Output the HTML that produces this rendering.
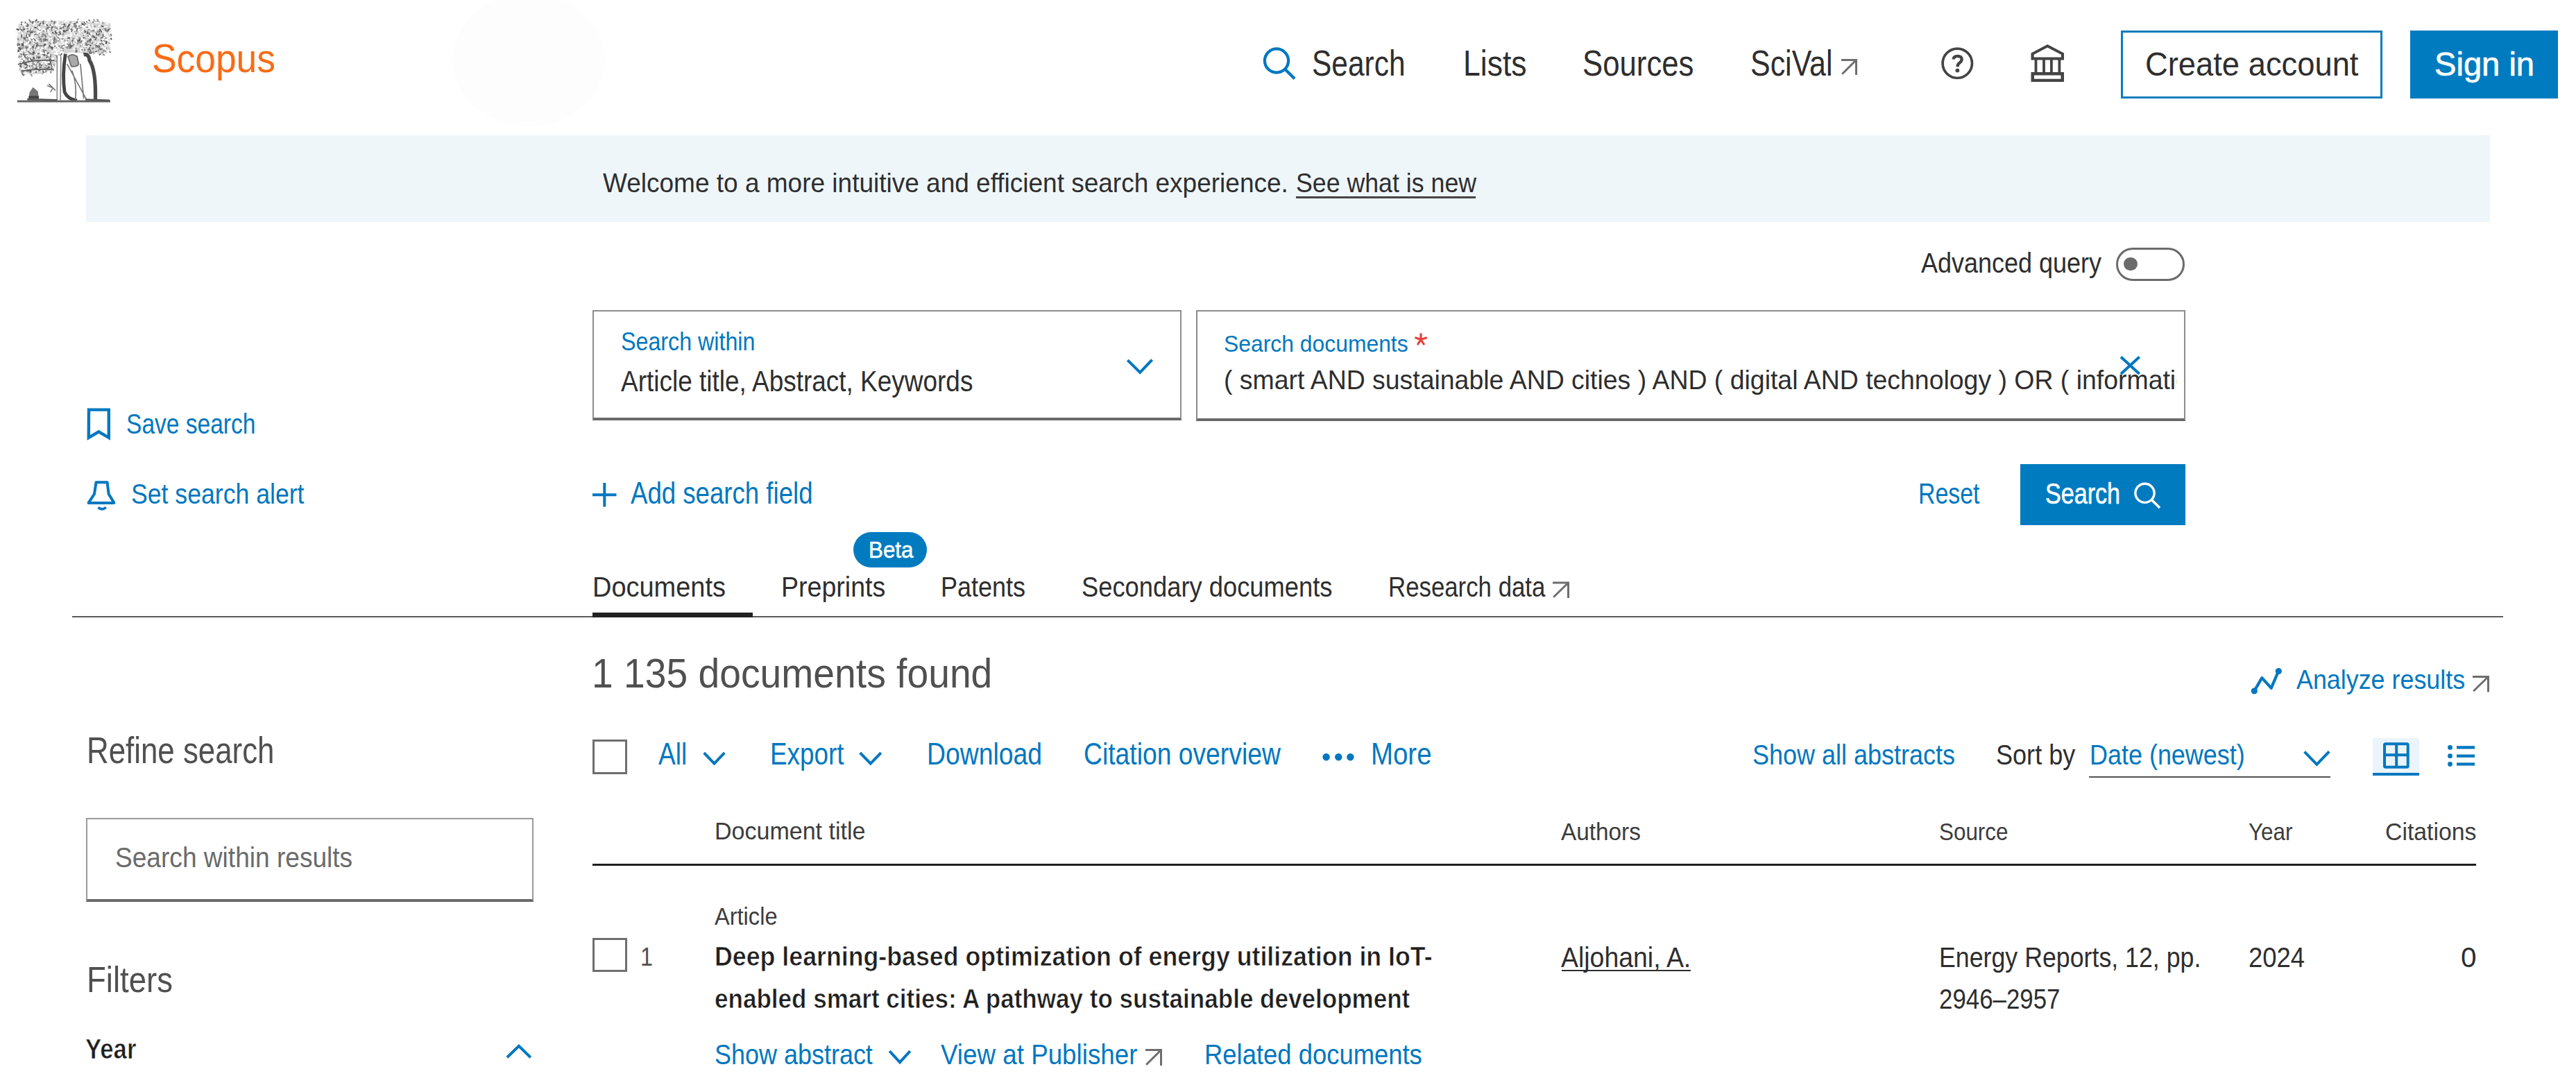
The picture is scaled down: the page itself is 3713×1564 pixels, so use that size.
<!DOCTYPE html>
<html><head><meta charset="utf-8"><title>Scopus - Document search results</title>
<style>
html,body{margin:0;padding:0;background:#fff;}
body{width:3713px;height:1564px;position:relative;overflow:hidden;font-family:"Liberation Sans",sans-serif;}
.t{position:absolute;white-space:nowrap;line-height:1;transform-origin:0 0;}
.r{position:absolute;box-sizing:border-box;}
</style></head><body>
<div class="r" style="left:652px;top:-10px;width:220px;height:192px;border-radius:50%;background:#fdfdfd"></div>
<svg class="r" style="left:20px;top:25px;width:145px;height:130px" viewBox="0 0 1210 1085" preserveAspectRatio="none"><polygon points="60,60 200,40 400,45 600,40 800,45 1000,40 1160,70 1170,200 1150,300 1165,400 1080,450 900,440 700,420 600,440 520,470 500,560 480,650 300,680 120,690 60,640 70,520 50,400 40,250 50,130" fill="#d4d4d4"/><path d="M73 343 L103 331" stroke="#777" stroke-width="13"/><path d="M570 200 L541 192" stroke="#555" stroke-width="18"/><path d="M501 158 L519 139" stroke="#555" stroke-width="13"/><path d="M738 122 L775 123" stroke="#777" stroke-width="18"/><path d="M1125 148 L1137 169" stroke="#777" stroke-width="16"/><path d="M806 173 L837 161" stroke="#fff" stroke-width="14"/><path d="M448 148 L460 163" stroke="#999" stroke-width="19"/><path d="M840 83 L824 102" stroke="#f4f4f4" stroke-width="15"/><path d="M104 674 L139 679" stroke="#fff" stroke-width="12"/><path d="M930 278 L914 269" stroke="#555" stroke-width="18"/><path d="M174 200 L186 174" stroke="#fff" stroke-width="15"/><path d="M162 526 L173 491" stroke="#555" stroke-width="15"/><path d="M1146 176 L1120 173" stroke="#777" stroke-width="15"/><path d="M1084 394 L1075 417" stroke="#777" stroke-width="18"/><path d="M390 354 L386 335" stroke="#fff" stroke-width="16"/><path d="M499 194 L469 174" stroke="#fff" stroke-width="17"/><path d="M205 676 L182 649" stroke="#999" stroke-width="19"/><path d="M188 516 L218 506" stroke="#fff" stroke-width="13"/><path d="M531 137 L545 117" stroke="#fff" stroke-width="19"/><path d="M741 150 L702 145" stroke="#f4f4f4" stroke-width="18"/><path d="M581 229 L564 241" stroke="#fff" stroke-width="19"/><path d="M641 157 L675 142" stroke="#777" stroke-width="13"/><path d="M348 548 L365 529" stroke="#999" stroke-width="18"/><path d="M451 498 L445 526" stroke="#f4f4f4" stroke-width="18"/><path d="M1121 261 L1137 294" stroke="#fff" stroke-width="16"/><path d="M323 477 L288 485" stroke="#f4f4f4" stroke-width="17"/><path d="M443 218 L421 250" stroke="#fff" stroke-width="15"/><path d="M1121 377 L1100 373" stroke="#999" stroke-width="19"/><path d="M234 547 L206 531" stroke="#fff" stroke-width="14"/><path d="M261 421 L245 406" stroke="#f4f4f4" stroke-width="13"/><path d="M1147 148 L1163 135" stroke="#777" stroke-width="16"/><path d="M660 310 L640 336" stroke="#555" stroke-width="17"/><path d="M309 627 L336 627" stroke="#999" stroke-width="19"/><path d="M661 236 L653 264" stroke="#fff" stroke-width="14"/><path d="M437 124 L412 140" stroke="#fff" stroke-width="15"/><path d="M201 427 L165 412" stroke="#777" stroke-width="17"/><path d="M437 621 L457 621" stroke="#fff" stroke-width="19"/><path d="M650 252 L671 230" stroke="#fff" stroke-width="15"/><path d="M296 229 L322 225" stroke="#777" stroke-width="17"/><path d="M601 310 L584 346" stroke="#fff" stroke-width="19"/><path d="M202 55 L181 22" stroke="#777" stroke-width="14"/><path d="M55 386 L49 424" stroke="#555" stroke-width="14"/><path d="M342 141 L367 139" stroke="#fff" stroke-width="20"/><path d="M58 122 L51 155" stroke="#fff" stroke-width="14"/><path d="M639 342 L617 368" stroke="#fff" stroke-width="13"/><path d="M815 110 L806 89" stroke="#fff" stroke-width="18"/><path d="M523 414 L515 383" stroke="#fff" stroke-width="19"/><path d="M991 349 L977 318" stroke="#999" stroke-width="16"/><path d="M897 237 L932 238" stroke="#fff" stroke-width="14"/><path d="M201 351 L174 342" stroke="#999" stroke-width="16"/><path d="M521 392 L553 402" stroke="#999" stroke-width="19"/><path d="M69 510 L108 504" stroke="#f4f4f4" stroke-width="16"/><path d="M179 120 L152 96" stroke="#555" stroke-width="18"/><path d="M192 230 L211 220" stroke="#fff" stroke-width="13"/><path d="M946 84 L953 113" stroke="#f4f4f4" stroke-width="15"/><path d="M121 77 L91 62" stroke="#fff" stroke-width="13"/><path d="M528 244 L505 228" stroke="#f4f4f4" stroke-width="15"/><path d="M103 493 L122 519" stroke="#fff" stroke-width="14"/><path d="M1104 397 L1108 416" stroke="#777" stroke-width="14"/><path d="M888 376 L904 393" stroke="#999" stroke-width="16"/><path d="M479 125 L505 128" stroke="#fff" stroke-width="17"/><path d="M143 121 L124 108" stroke="#fff" stroke-width="16"/><path d="M405 558 L439 564" stroke="#555" stroke-width="19"/><path d="M1107 319 L1117 286" stroke="#555" stroke-width="20"/><path d="M198 446 L184 464" stroke="#999" stroke-width="19"/><path d="M467 510 L452 529" stroke="#f4f4f4" stroke-width="15"/><path d="M1002 376 L977 360" stroke="#f4f4f4" stroke-width="13"/><path d="M112 64 L120 85" stroke="#fff" stroke-width="19"/><path d="M1045 443 L1020 455" stroke="#555" stroke-width="14"/><path d="M778 86 L804 59" stroke="#fff" stroke-width="13"/><path d="M327 220 L340 241" stroke="#777" stroke-width="12"/><path d="M1053 264 L1053 239" stroke="#555" stroke-width="18"/><path d="M801 347 L821 340" stroke="#f4f4f4" stroke-width="15"/><path d="M553 196 L572 195" stroke="#f4f4f4" stroke-width="12"/><path d="M300 91 L268 114" stroke="#999" stroke-width="17"/><path d="M248 275 L285 291" stroke="#fff" stroke-width="13"/><path d="M312 477 L342 465" stroke="#fff" stroke-width="18"/><path d="M346 340 L314 350" stroke="#777" stroke-width="12"/><path d="M626 268 L643 278" stroke="#fff" stroke-width="13"/><path d="M768 363 L772 345" stroke="#fff" stroke-width="16"/><path d="M1114 166 L1103 136" stroke="#777" stroke-width="16"/><path d="M135 244 L159 263" stroke="#777" stroke-width="17"/><path d="M1008 179 L1038 183" stroke="#fff" stroke-width="15"/><path d="M908 380 L920 393" stroke="#999" stroke-width="18"/><path d="M667 130 L632 134" stroke="#999" stroke-width="19"/><path d="M394 124 L414 136" stroke="#555" stroke-width="18"/><path d="M352 360 L352 394" stroke="#999" stroke-width="19"/><path d="M1041 87 L1044 61" stroke="#fff" stroke-width="12"/><path d="M363 651 L376 665" stroke="#777" stroke-width="19"/><path d="M342 568 L327 582" stroke="#555" stroke-width="14"/><path d="M195 364 L187 380" stroke="#fff" stroke-width="18"/><path d="M670 58 L689 64" stroke="#999" stroke-width="15"/><path d="M332 658 L361 662" stroke="#777" stroke-width="15"/><path d="M413 48 L382 30" stroke="#f4f4f4" stroke-width="20"/><path d="M343 434 L329 418" stroke="#fff" stroke-width="18"/><path d="M174 246 L198 232" stroke="#fff" stroke-width="13"/><path d="M95 474 L110 498" stroke="#fff" stroke-width="17"/><path d="M157 569 L140 579" stroke="#555" stroke-width="12"/><path d="M692 353 L712 335" stroke="#777" stroke-width="14"/><path d="M969 237 L934 234" stroke="#777" stroke-width="15"/><path d="M110 361 L98 379" stroke="#777" stroke-width="16"/><path d="M83 150 L110 170" stroke="#777" stroke-width="18"/><path d="M893 350 L864 356" stroke="#555" stroke-width="18"/><path d="M465 47 L435 44" stroke="#777" stroke-width="19"/><path d="M65 481 L43 462" stroke="#fff" stroke-width="16"/><path d="M835 299 L871 295" stroke="#f4f4f4" stroke-width="16"/><path d="M109 135 L75 155" stroke="#555" stroke-width="17"/><path d="M630 225 L648 234" stroke="#999" stroke-width="17"/><path d="M305 65 L338 85" stroke="#999" stroke-width="19"/><path d="M875 437 L882 466" stroke="#555" stroke-width="14"/><path d="M1141 394 L1127 405" stroke="#fff" stroke-width="15"/><path d="M888 383 L897 415" stroke="#999" stroke-width="15"/><path d="M163 488 L131 477" stroke="#999" stroke-width="14"/><path d="M153 231 L163 197" stroke="#555" stroke-width="19"/><path d="M229 451 L232 429" stroke="#555" stroke-width="17"/><path d="M657 305 L660 333" stroke="#fff" stroke-width="19"/><path d="M382 222 L351 198" stroke="#777" stroke-width="15"/><path d="M209 232 L180 222" stroke="#fff" stroke-width="14"/><path d="M109 355 L129 321" stroke="#999" stroke-width="14"/><path d="M569 290 L600 268" stroke="#fff" stroke-width="19"/><path d="M579 106 L586 126" stroke="#555" stroke-width="15"/><path d="M455 534 L431 522" stroke="#999" stroke-width="19"/><path d="M157 107 L177 116" stroke="#999" stroke-width="13"/><path d="M905 200 L931 190" stroke="#555" stroke-width="13"/><path d="M715 283 L703 257" stroke="#999" stroke-width="20"/><path d="M122 534 L117 510" stroke="#555" stroke-width="18"/><path d="M261 263 L285 293" stroke="#f4f4f4" stroke-width="18"/><path d="M932 414 L924 439" stroke="#555" stroke-width="16"/><path d="M97 313 L99 346" stroke="#555" stroke-width="13"/><path d="M1133 400 L1113 409" stroke="#fff" stroke-width="19"/><path d="M317 334 L331 348" stroke="#777" stroke-width="15"/><path d="M59 203 L33 210" stroke="#fff" stroke-width="13"/><path d="M1138 166 L1144 149" stroke="#fff" stroke-width="13"/><path d="M355 661 L344 634" stroke="#555" stroke-width="13"/><path d="M911 365 L936 335" stroke="#f4f4f4" stroke-width="17"/><path d="M759 63 L793 69" stroke="#fff" stroke-width="18"/><path d="M971 321 L985 310" stroke="#777" stroke-width="19"/><path d="M207 548 L173 566" stroke="#999" stroke-width="14"/><path d="M516 216 L492 221" stroke="#f4f4f4" stroke-width="17"/><path d="M127 487 L153 493" stroke="#777" stroke-width="14"/><path d="M194 194 L228 175" stroke="#555" stroke-width="12"/><path d="M958 96 L980 119" stroke="#999" stroke-width="18"/><path d="M212 377 L245 372" stroke="#555" stroke-width="14"/><path d="M160 300 L147 335" stroke="#fff" stroke-width="17"/><path d="M1131 197 L1110 187" stroke="#fff" stroke-width="12"/><path d="M475 194 L466 178" stroke="#555" stroke-width="18"/><path d="M513 368 L486 345" stroke="#555" stroke-width="18"/><path d="M310 490 L336 467" stroke="#fff" stroke-width="14"/><path d="M1085 281 L1052 274" stroke="#fff" stroke-width="20"/><path d="M1156 236 L1176 269" stroke="#555" stroke-width="17"/><path d="M102 178 L88 164" stroke="#fff" stroke-width="14"/><path d="M196 268 L166 269" stroke="#777" stroke-width="17"/><path d="M88 522 L116 547" stroke="#999" stroke-width="20"/><path d="M338 219 L345 186" stroke="#999" stroke-width="14"/><path d="M68 204 L86 235" stroke="#f4f4f4" stroke-width="14"/><path d="M1030 325 L1048 312" stroke="#777" stroke-width="17"/><path d="M1059 271 L1079 290" stroke="#f4f4f4" stroke-width="19"/><path d="M85 423 L110 446" stroke="#fff" stroke-width="16"/><path d="M692 389 L681 357" stroke="#f4f4f4" stroke-width="17"/><path d="M145 83 L114 91" stroke="#fff" stroke-width="18"/><path d="M118 458 L130 441" stroke="#999" stroke-width="14"/><path d="M897 375 L920 359" stroke="#777" stroke-width="17"/><path d="M1106 245 L1085 226" stroke="#777" stroke-width="15"/><path d="M129 316 L106 294" stroke="#777" stroke-width="14"/><path d="M1074 150 L1035 150" stroke="#999" stroke-width="19"/><path d="M204 214 L174 215" stroke="#777" stroke-width="16"/><path d="M788 313 L796 277" stroke="#999" stroke-width="17"/><path d="M262 317 L278 292" stroke="#fff" stroke-width="17"/><path d="M172 540 L161 558" stroke="#f4f4f4" stroke-width="14"/><path d="M894 156 L899 127" stroke="#777" stroke-width="17"/><path d="M858 209 L837 223" stroke="#555" stroke-width="14"/><path d="M371 259 L398 259" stroke="#555" stroke-width="14"/><path d="M244 653 L253 617" stroke="#fff" stroke-width="15"/><path d="M562 87 L528 105" stroke="#fff" stroke-width="14"/><path d="M162 373 L197 357" stroke="#fff" stroke-width="15"/><path d="M232 200 L217 187" stroke="#f4f4f4" stroke-width="20"/><path d="M653 324 L649 354" stroke="#fff" stroke-width="12"/><path d="M191 467 L200 487" stroke="#f4f4f4" stroke-width="16"/><path d="M198 75 L224 64" stroke="#fff" stroke-width="16"/><path d="M329 148 L310 128" stroke="#fff" stroke-width="18"/><path d="M723 127 L733 159" stroke="#f4f4f4" stroke-width="18"/><path d="M543 192 L543 224" stroke="#f4f4f4" stroke-width="16"/><path d="M224 494 L249 513" stroke="#999" stroke-width="17"/><path d="M828 393 L807 385" stroke="#555" stroke-width="15"/><path d="M1079 223 L1060 256" stroke="#777" stroke-width="16"/><path d="M372 281 L376 257" stroke="#777" stroke-width="18"/><path d="M1106 243 L1126 217" stroke="#fff" stroke-width="19"/><path d="M708 340 L734 325" stroke="#999" stroke-width="18"/><path d="M220 361 L255 362" stroke="#fff" stroke-width="19"/><path d="M89 388 L68 391" stroke="#777" stroke-width="13"/><path d="M233 370 L220 347" stroke="#555" stroke-width="15"/><path d="M769 189 L766 207" stroke="#f4f4f4" stroke-width="14"/><path d="M116 645 L94 667" stroke="#777" stroke-width="18"/><path d="M461 428 L463 400" stroke="#f4f4f4" stroke-width="18"/><path d="M1048 385 L1075 385" stroke="#fff" stroke-width="12"/><path d="M906 109 L879 116" stroke="#fff" stroke-width="16"/><path d="M630 56 L639 23" stroke="#fff" stroke-width="16"/><path d="M271 463 L244 473" stroke="#555" stroke-width="18"/><path d="M267 387 L284 373" stroke="#fff" stroke-width="12"/><path d="M524 235 L521 209" stroke="#777" stroke-width="18"/><path d="M169 290 L177 309" stroke="#fff" stroke-width="13"/><path d="M1126 218 L1104 215" stroke="#f4f4f4" stroke-width="19"/><path d="M936 310 L919 283" stroke="#f4f4f4" stroke-width="18"/><path d="M868 172 L839 155" stroke="#555" stroke-width="14"/><path d="M453 102 L433 86" stroke="#777" stroke-width="17"/><path d="M246 394 L235 356" stroke="#f4f4f4" stroke-width="12"/><path d="M982 252 L1000 243" stroke="#777" stroke-width="15"/><path d="M458 616 L455 646" stroke="#999" stroke-width="17"/><path d="M647 151 L622 163" stroke="#555" stroke-width="14"/><path d="M373 571 L400 584" stroke="#777" stroke-width="13"/><path d="M780 244 L802 256" stroke="#777" stroke-width="15"/><path d="M390 481 L411 501" stroke="#555" stroke-width="18"/><path d="M136 357 L153 341" stroke="#999" stroke-width="13"/><path d="M354 332 L384 346" stroke="#777" stroke-width="19"/><path d="M980 423 L1003 435" stroke="#fff" stroke-width="13"/><path d="M431 654 L452 668" stroke="#777" stroke-width="15"/><path d="M157 251 L171 226" stroke="#555" stroke-width="17"/><path d="M106 188 L100 211" stroke="#fff" stroke-width="16"/><path d="M620 101 L583 98" stroke="#fff" stroke-width="17"/><path d="M735 304 L716 313" stroke="#fff" stroke-width="15"/><path d="M83 551 L49 569" stroke="#555" stroke-width="13"/><path d="M87 111 L88 73" stroke="#555" stroke-width="19"/><path d="M373 230 L352 239" stroke="#fff" stroke-width="16"/><path d="M223 256 L213 229" stroke="#fff" stroke-width="19"/><path d="M240 348 L227 377" stroke="#555" stroke-width="16"/><path d="M349 638 L332 665" stroke="#555" stroke-width="15"/><path d="M187 526 L183 498" stroke="#999" stroke-width="13"/><path d="M812 245 L820 265" stroke="#fff" stroke-width="16"/><path d="M174 286 L181 307" stroke="#fff" stroke-width="14"/><path d="M604 418 L566 417" stroke="#fff" stroke-width="14"/><path d="M423 438 L443 471" stroke="#555" stroke-width="14"/><path d="M77 349 L88 386" stroke="#999" stroke-width="18"/><path d="M290 336 L310 341" stroke="#777" stroke-width="13"/><path d="M824 118 L849 99" stroke="#f4f4f4" stroke-width="17"/><path d="M1082 268 L1068 291" stroke="#999" stroke-width="14"/><path d="M482 197 L518 188" stroke="#999" stroke-width="16"/><path d="M302 76 L302 41" stroke="#fff" stroke-width="14"/><path d="M792 103 L759 106" stroke="#555" stroke-width="16"/><path d="M176 92 L176 118" stroke="#fff" stroke-width="16"/><path d="M709 249 L690 265" stroke="#f4f4f4" stroke-width="14"/><path d="M990 420 L958 429" stroke="#fff" stroke-width="17"/><path d="M298 44 L290 65" stroke="#777" stroke-width="15"/><path d="M771 182 L782 164" stroke="#777" stroke-width="13"/><path d="M868 357 L890 334" stroke="#f4f4f4" stroke-width="14"/><path d="M56 147 L75 177" stroke="#fff" stroke-width="14"/><path d="M572 431 L559 414" stroke="#fff" stroke-width="16"/><path d="M1072 157 L1051 151" stroke="#f4f4f4" stroke-width="13"/><path d="M130 269 L119 239" stroke="#555" stroke-width="17"/><path d="M468 565 L492 576" stroke="#777" stroke-width="15"/><path d="M1101 80 L1127 78" stroke="#fff" stroke-width="12"/><path d="M414 485 L393 508" stroke="#fff" stroke-width="17"/><path d="M224 289 L241 256" stroke="#777" stroke-width="17"/><path d="M511 352 L524 334" stroke="#fff" stroke-width="16"/><path d="M310 194 L304 171" stroke="#777" stroke-width="13"/><path d="M1012 135 L980 138" stroke="#f4f4f4" stroke-width="13"/><path d="M166 70 L169 34" stroke="#fff" stroke-width="19"/><path d="M417 540 L385 534" stroke="#f4f4f4" stroke-width="18"/><path d="M424 186 L439 211" stroke="#f4f4f4" stroke-width="19"/><path d="M405 540 L390 531" stroke="#555" stroke-width="14"/><path d="M660 205 L682 201" stroke="#f4f4f4" stroke-width="14"/><path d="M794 409 L817 392" stroke="#999" stroke-width="15"/><path d="M284 324 L270 356" stroke="#777" stroke-width="15"/><path d="M440 202 L432 233" stroke="#fff" stroke-width="14"/><path d="M89 474 L102 459" stroke="#999" stroke-width="18"/><path d="M398 655 L435 665" stroke="#fff" stroke-width="15"/><path d="M169 582 L143 578" stroke="#555" stroke-width="18"/><path d="M47 239 L10 248" stroke="#f4f4f4" stroke-width="13"/><path d="M1156 400 L1149 419" stroke="#fff" stroke-width="20"/><path d="M48 352 L45 312" stroke="#555" stroke-width="14"/><path d="M919 199 L901 208" stroke="#777" stroke-width="17"/><path d="M614 293 L625 324" stroke="#fff" stroke-width="16"/><path d="M454 136 L475 140" stroke="#fff" stroke-width="15"/><path d="M1125 344 L1090 330" stroke="#fff" stroke-width="14"/><path d="M296 357 L296 381" stroke="#fff" stroke-width="19"/><path d="M693 229 L689 211" stroke="#fff" stroke-width="19"/><path d="M791 73 L758 89" stroke="#fff" stroke-width="13"/><path d="M437 486 L441 459" stroke="#777" stroke-width="16"/><path d="M191 656 L210 635" stroke="#fff" stroke-width="14"/><path d="M1148 250 L1180 233" stroke="#f4f4f4" stroke-width="14"/><path d="M459 239 L425 235" stroke="#999" stroke-width="15"/><path d="M233 186 L207 184" stroke="#999" stroke-width="15"/><path d="M985 183 L999 214" stroke="#555" stroke-width="15"/><path d="M90 545 L113 530" stroke="#fff" stroke-width="17"/><path d="M524 166 L528 186" stroke="#555" stroke-width="15"/><path d="M396 188 L410 209" stroke="#999" stroke-width="16"/><path d="M233 615 L250 606" stroke="#fff" stroke-width="15"/><path d="M138 363 L158 359" stroke="#777" stroke-width="17"/><path d="M609 357 L597 331" stroke="#fff" stroke-width="16"/><path d="M743 423 L751 390" stroke="#777" stroke-width="13"/><path d="M893 374 L885 344" stroke="#f4f4f4" stroke-width="14"/><path d="M799 273 L769 285" stroke="#555" stroke-width="18"/><path d="M248 417 L233 398" stroke="#777" stroke-width="17"/><path d="M842 130 L854 109" stroke="#fff" stroke-width="15"/><path d="M395 62 L390 89" stroke="#fff" stroke-width="16"/><path d="M781 210 L799 220" stroke="#fff" stroke-width="13"/><path d="M500 460 L521 476" stroke="#777" stroke-width="16"/><path d="M517 346 L492 371" stroke="#fff" stroke-width="14"/><path d="M260 656 L253 628" stroke="#f4f4f4" stroke-width="13"/><path d="M358 447 L339 434" stroke="#555" stroke-width="15"/><path d="M189 534 L196 566" stroke="#f4f4f4" stroke-width="13"/><path d="M885 105 L863 102" stroke="#fff" stroke-width="20"/><path d="M298 515 L270 527" stroke="#999" stroke-width="13"/><path d="M198 355 L176 379" stroke="#fff" stroke-width="12"/><path d="M197 601 L183 586" stroke="#555" stroke-width="15"/><path d="M82 151 L61 176" stroke="#f4f4f4" stroke-width="16"/><path d="M516 187 L528 162" stroke="#f4f4f4" stroke-width="20"/><path d="M176 509 L208 497" stroke="#f4f4f4" stroke-width="19"/><path d="M258 565 L220 557" stroke="#999" stroke-width="15"/><path d="M1053 307 L1074 319" stroke="#555" stroke-width="13"/><path d="M813 86 L825 69" stroke="#777" stroke-width="19"/><path d="M1080 324 L1094 301" stroke="#fff" stroke-width="15"/><path d="M1151 165 L1181 144" stroke="#f4f4f4" stroke-width="14"/><path d="M80 309 L89 284" stroke="#fff" stroke-width="15"/><path d="M183 432 L211 434" stroke="#777" stroke-width="12"/><path d="M331 361 L358 374" stroke="#f4f4f4" stroke-width="19"/><path d="M236 564 L273 574" stroke="#555" stroke-width="17"/><path d="M149 114 L173 87" stroke="#555" stroke-width="16"/><path d="M307 340 L330 344" stroke="#999" stroke-width="13"/><path d="M571 216 L546 245" stroke="#fff" stroke-width="17"/><path d="M307 165 L341 150" stroke="#555" stroke-width="18"/><path d="M477 348 L467 326" stroke="#fff" stroke-width="16"/><path d="M216 290 L232 274" stroke="#fff" stroke-width="13"/><path d="M449 583 L482 578" stroke="#777" stroke-width="18"/><path d="M859 358 L865 340" stroke="#f4f4f4" stroke-width="20"/><path d="M178 122 L176 96" stroke="#555" stroke-width="19"/><path d="M297 644 L260 650" stroke="#fff" stroke-width="13"/><path d="M223 586 L206 559" stroke="#777" stroke-width="18"/><path d="M525 60 L522 87" stroke="#999" stroke-width="13"/><path d="M869 415 L856 441" stroke="#fff" stroke-width="13"/><path d="M426 551 L419 525" stroke="#fff" stroke-width="13"/><path d="M280 317 L279 353" stroke="#555" stroke-width="15"/><path d="M524 280 L547 279" stroke="#999" stroke-width="18"/><path d="M333 672 L350 681" stroke="#999" stroke-width="17"/><path d="M187 582 L166 551" stroke="#f4f4f4" stroke-width="17"/><path d="M173 225 L201 223" stroke="#777" stroke-width="18"/><path d="M753 94 L760 124" stroke="#777" stroke-width="16"/><path d="M340 146 L319 175" stroke="#fff" stroke-width="17"/><path d="M354 264 L333 263" stroke="#fff" stroke-width="19"/><path d="M726 114 L744 97" stroke="#555" stroke-width="16"/><path d="M602 168 L568 181" stroke="#f4f4f4" stroke-width="15"/><path d="M217 640 L200 646" stroke="#777" stroke-width="16"/><path d="M500 448 L519 430" stroke="#fff" stroke-width="13"/><path d="M1038 208 L1023 192" stroke="#777" stroke-width="18"/><path d="M242 314 L220 288" stroke="#777" stroke-width="15"/><path d="M237 552 L221 543" stroke="#999" stroke-width="20"/><path d="M275 499 L243 524" stroke="#fff" stroke-width="17"/><path d="M914 48 L899 30" stroke="#777" stroke-width="19"/><path d="M851 336 L840 354" stroke="#fff" stroke-width="18"/><path d="M848 326 L822 298" stroke="#fff" stroke-width="16"/><path d="M352 81 L357 61" stroke="#555" stroke-width="17"/><path d="M524 341 L528 375" stroke="#f4f4f4" stroke-width="18"/><path d="M526 359 L503 376" stroke="#999" stroke-width="14"/><path d="M927 59 L940 39" stroke="#fff" stroke-width="20"/><path d="M120 446 L99 466" stroke="#fff" stroke-width="16"/><path d="M595 258 L575 266" stroke="#999" stroke-width="18"/><path d="M692 187 L715 169" stroke="#f4f4f4" stroke-width="13"/><path d="M199 213 L196 187" stroke="#999" stroke-width="17"/><path d="M735 280 L723 257" stroke="#f4f4f4" stroke-width="15"/><path d="M971 233 L983 255" stroke="#777" stroke-width="13"/><path d="M1142 258 L1146 233" stroke="#fff" stroke-width="19"/><path d="M316 239 L295 239" stroke="#777" stroke-width="17"/><path d="M844 370 L814 384" stroke="#555" stroke-width="17"/><path d="M351 534 L331 565" stroke="#fff" stroke-width="14"/><path d="M981 51 L943 59" stroke="#777" stroke-width="16"/><path d="M482 606 L500 640" stroke="#fff" stroke-width="13"/><path d="M67 416 L84 426" stroke="#fff" stroke-width="18"/><path d="M619 274 L604 285" stroke="#999" stroke-width="18"/><path d="M150 172 L156 143" stroke="#f4f4f4" stroke-width="12"/><path d="M276 410 L296 422" stroke="#f4f4f4" stroke-width="18"/><path d="M110 595 L121 617" stroke="#777" stroke-width="19"/><path d="M1166 199 L1175 226" stroke="#777" stroke-width="14"/><path d="M289 642 L323 632" stroke="#777" stroke-width="20"/><path d="M912 437 L913 407" stroke="#777" stroke-width="19"/><path d="M648 317 L662 351" stroke="#777" stroke-width="20"/><path d="M747 360 L717 369" stroke="#fff" stroke-width="14"/><path d="M385 458 L402 463" stroke="#555" stroke-width="18"/><path d="M263 359 L261 381" stroke="#777" stroke-width="14"/><path d="M414 161 L389 167" stroke="#555" stroke-width="17"/><path d="M842 271 L824 258" stroke="#f4f4f4" stroke-width="14"/><path d="M559 202 L550 168" stroke="#777" stroke-width="20"/><path d="M812 406 L799 371" stroke="#f4f4f4" stroke-width="20"/><path d="M277 322 L283 295" stroke="#777" stroke-width="19"/><path d="M766 263 L758 241" stroke="#f4f4f4" stroke-width="14"/><path d="M531 102 L497 95" stroke="#fff" stroke-width="18"/><path d="M371 510 L394 530" stroke="#999" stroke-width="20"/><path d="M1082 180 L1103 186" stroke="#fff" stroke-width="13"/><path d="M415 121 L454 126" stroke="#555" stroke-width="15"/><path d="M332 234 L363 234" stroke="#999" stroke-width="12"/><path d="M653 45 L643 77" stroke="#f4f4f4" stroke-width="13"/><path d="M396 117 L397 154" stroke="#999" stroke-width="13"/><path d="M524 167 L543 145" stroke="#999" stroke-width="15"/><path d="M582 440 L614 435" stroke="#fff" stroke-width="14"/><path d="M384 431 L387 396" stroke="#777" stroke-width="18"/><path d="M258 455 L246 491" stroke="#fff" stroke-width="16"/><path d="M456 337 L447 309" stroke="#fff" stroke-width="18"/><path d="M820 386 L790 385" stroke="#999" stroke-width="15"/><path d="M761 168 L733 170" stroke="#555" stroke-width="12"/><path d="M355 454 L382 452" stroke="#555" stroke-width="18"/><path d="M1132 167 L1145 184" stroke="#f4f4f4" stroke-width="14"/><path d="M398 130 L417 118" stroke="#777" stroke-width="15"/><path d="M664 57 L651 31" stroke="#f4f4f4" stroke-width="18"/><path d="M414 67 L396 71" stroke="#f4f4f4" stroke-width="19"/><path d="M125 453 L120 428" stroke="#f4f4f4" stroke-width="15"/><path d="M287 605 L258 610" stroke="#777" stroke-width="16"/><path d="M97 652 L105 619" stroke="#fff" stroke-width="14"/><path d="M79 61 L60 65" stroke="#fff" stroke-width="13"/><path d="M254 205 L264 226" stroke="#fff" stroke-width="16"/><path d="M283 656 L279 637" stroke="#f4f4f4" stroke-width="15"/><path d="M857 300 L870 331" stroke="#999" stroke-width="15"/><path d="M625 245 L624 213" stroke="#fff" stroke-width="17"/><path d="M197 423 L222 421" stroke="#777" stroke-width="17"/><path d="M133 543 L163 517" stroke="#f4f4f4" stroke-width="14"/><path d="M338 212 L361 216" stroke="#999" stroke-width="18"/><path d="M333 504 L294 510" stroke="#fff" stroke-width="19"/><path d="M365 390 L352 426" stroke="#777" stroke-width="17"/><path d="M146 282 L138 252" stroke="#999" stroke-width="18"/><path d="M899 393 L917 380" stroke="#555" stroke-width="16"/><path d="M230 503 L207 516" stroke="#555" stroke-width="14"/><path d="M128 457 L126 438" stroke="#999" stroke-width="15"/><path d="M929 382 L948 392" stroke="#999" stroke-width="17"/><path d="M1134 305 L1158 316" stroke="#999" stroke-width="12"/><path d="M453 112 L478 117" stroke="#555" stroke-width="13"/><path d="M100 537 L99 574" stroke="#f4f4f4" stroke-width="16"/><path d="M189 552 L220 531" stroke="#fff" stroke-width="13"/><path d="M765 152 L796 136" stroke="#f4f4f4" stroke-width="14"/><path d="M824 158 L847 152" stroke="#fff" stroke-width="15"/><path d="M568 384 L590 358" stroke="#777" stroke-width="16"/><path d="M311 551 L320 573" stroke="#555" stroke-width="12"/><path d="M245 429 L220 419" stroke="#555" stroke-width="14"/><path d="M284 299 L303 270" stroke="#fff" stroke-width="16"/><path d="M418 366 L449 378" stroke="#f4f4f4" stroke-width="19"/><path d="M369 405 L389 438" stroke="#fff" stroke-width="18"/><path d="M287 594 L280 633" stroke="#fff" stroke-width="17"/><path d="M397 221 L377 211" stroke="#f4f4f4" stroke-width="14"/><path d="M301 280 L320 250" stroke="#999" stroke-width="19"/><path d="M413 279 L433 266" stroke="#fff" stroke-width="13"/><path d="M889 228 L915 204" stroke="#555" stroke-width="15"/><path d="M1055 65 L1083 46" stroke="#fff" stroke-width="16"/><path d="M293 159 L293 122" stroke="#777" stroke-width="19"/><path d="M917 348 L927 332" stroke="#555" stroke-width="18"/><path d="M506 135 L526 130" stroke="#555" stroke-width="15"/><path d="M187 484 L156 470" stroke="#999" stroke-width="14"/><path d="M848 179 L866 180" stroke="#555" stroke-width="13"/><path d="M647 273 L628 306" stroke="#999" stroke-width="15"/><path d="M244 324 L238 299" stroke="#fff" stroke-width="16"/><path d="M234 486 L264 474" stroke="#f4f4f4" stroke-width="17"/><path d="M575 298 L575 267" stroke="#f4f4f4" stroke-width="18"/><path d="M478 260 L494 235" stroke="#777" stroke-width="14"/><path d="M273 601 L260 633" stroke="#555" stroke-width="17"/><path d="M86 489 L55 468" stroke="#999" stroke-width="20"/><path d="M567 452 L576 435" stroke="#555" stroke-width="15"/><path d="M1075 228 L1106 247" stroke="#555" stroke-width="16"/><path d="M985 163 L981 125" stroke="#fff" stroke-width="16"/><path d="M1028 368 L1049 391" stroke="#777" stroke-width="17"/><path d="M1095 416 L1072 406" stroke="#999" stroke-width="20"/><path d="M973 245 L945 219" stroke="#555" stroke-width="15"/><path d="M853 94 L819 81" stroke="#555" stroke-width="16"/><path d="M197 268 L199 235" stroke="#fff" stroke-width="19"/><path d="M873 73 L842 61" stroke="#555" stroke-width="20"/><path d="M817 288 L817 256" stroke="#fff" stroke-width="15"/><path d="M142 476 L165 452" stroke="#fff" stroke-width="13"/><path d="M147 449 L183 460" stroke="#777" stroke-width="12"/><path d="M239 423 L254 434" stroke="#555" stroke-width="16"/><path d="M1139 137 L1144 159" stroke="#555" stroke-width="16"/><path d="M379 533 L415 550" stroke="#fff" stroke-width="17"/><path d="M160 637 L122 643" stroke="#fff" stroke-width="18"/><path d="M308 137 L291 119" stroke="#fff" stroke-width="17"/><path d="M603 336 L572 356" stroke="#555" stroke-width="17"/><path d="M412 612 L416 632" stroke="#fff" stroke-width="19"/><path d="M168 264 L203 268" stroke="#f4f4f4" stroke-width="15"/><path d="M884 65 L916 48" stroke="#999" stroke-width="13"/><path d="M56 438 L28 441" stroke="#fff" stroke-width="20"/><path d="M559 371 L597 379" stroke="#555" stroke-width="15"/><path d="M626 240 L663 236" stroke="#f4f4f4" stroke-width="12"/><path d="M492 288 L485 255" stroke="#999" stroke-width="12"/><path d="M338 383 L347 363" stroke="#fff" stroke-width="15"/><path d="M224 366 L191 382" stroke="#999" stroke-width="13"/><path d="M124 472 L142 470" stroke="#555" stroke-width="17"/><path d="M577 133 L548 131" stroke="#777" stroke-width="18"/><path d="M418 375 L430 343" stroke="#999" stroke-width="20"/><path d="M102 314 L121 342" stroke="#555" stroke-width="19"/><path d="M338 266 L314 260" stroke="#777" stroke-width="18"/><path d="M750 395 L731 393" stroke="#777" stroke-width="13"/><path d="M132 140 L110 148" stroke="#555" stroke-width="18"/><path d="M305 435 L275 441" stroke="#555" stroke-width="16"/><path d="M517 78 L536 72" stroke="#fff" stroke-width="17"/><path d="M538 389 L535 415" stroke="#fff" stroke-width="19"/><path d="M177 117 L195 96" stroke="#f4f4f4" stroke-width="14"/><path d="M102 658 L87 670" stroke="#999" stroke-width="14"/><path d="M849 111 L817 99" stroke="#fff" stroke-width="20"/><path d="M254 286 L226 273" stroke="#f4f4f4" stroke-width="13"/><path d="M849 222 L855 192" stroke="#f4f4f4" stroke-width="17"/><path d="M743 233 L763 246" stroke="#f4f4f4" stroke-width="17"/><path d="M76 323 L83 346" stroke="#fff" stroke-width="12"/><path d="M252 112 L262 128" stroke="#999" stroke-width="18"/><path d="M721 81 L729 119" stroke="#999" stroke-width="14"/><path d="M1016 103 L1048 101" stroke="#fff" stroke-width="17"/><path d="M726 56 L706 69" stroke="#f4f4f4" stroke-width="19"/><path d="M310 520 L281 548" stroke="#777" stroke-width="19"/><path d="M702 275 L704 296" stroke="#555" stroke-width="12"/><path d="M361 256 L340 264" stroke="#fff" stroke-width="20"/><path d="M519 441 L481 431" stroke="#fff" stroke-width="18"/><path d="M1030 256 L1010 240" stroke="#f4f4f4" stroke-width="14"/><path d="M424 523 L404 513" stroke="#777" stroke-width="15"/><path d="M763 290 L790 270" stroke="#555" stroke-width="16"/><path d="M225 648 L199 629" stroke="#fff" stroke-width="16"/><path d="M691 369 L665 354" stroke="#777" stroke-width="19"/><path d="M1143 204 L1167 179" stroke="#fff" stroke-width="12"/><path d="M1082 276 L1102 297" stroke="#999" stroke-width="15"/><path d="M720 328 L745 304" stroke="#999" stroke-width="16"/><path d="M119 517 L128 495" stroke="#fff" stroke-width="16"/><path d="M207 679 L217 711" stroke="#999" stroke-width="18"/><path d="M178 174 L157 171" stroke="#555" stroke-width="17"/><path d="M410 455 L435 459" stroke="#fff" stroke-width="20"/><path d="M70 502 L107 502" stroke="#555" stroke-width="15"/><path d="M167 279 L151 249" stroke="#fff" stroke-width="15"/><path d="M258 611 L241 583" stroke="#f4f4f4" stroke-width="12"/><path d="M190 166 L199 186" stroke="#555" stroke-width="14"/><path d="M149 146 L168 146" stroke="#f4f4f4" stroke-width="15"/><path d="M80 512 L107 517" stroke="#fff" stroke-width="17"/><path d="M508 198 L507 177" stroke="#f4f4f4" stroke-width="13"/><path d="M678 175 L700 206" stroke="#f4f4f4" stroke-width="17"/><path d="M276 93 L261 117" stroke="#fff" stroke-width="19"/><path d="M969 209 L979 187" stroke="#fff" stroke-width="19"/><path d="M570 87 L601 80" stroke="#999" stroke-width="14"/><path d="M923 162 L951 164" stroke="#999" stroke-width="17"/><path d="M325 369 L309 397" stroke="#999" stroke-width="19"/><path d="M794 388 L823 369" stroke="#fff" stroke-width="16"/><path d="M215 579 L210 558" stroke="#777" stroke-width="16"/><path d="M407 153 L415 182" stroke="#fff" stroke-width="19"/><path d="M1059 347 L1075 362" stroke="#f4f4f4" stroke-width="19"/><path d="M680 177 L684 154" stroke="#fff" stroke-width="15"/><path d="M54 392 L62 414" stroke="#555" stroke-width="14"/><path d="M486 477 L504 469" stroke="#fff" stroke-width="12"/><path d="M798 192 L781 170" stroke="#f4f4f4" stroke-width="16"/><path d="M1001 354 L1023 362" stroke="#777" stroke-width="16"/><path d="M571 376 L597 396" stroke="#f4f4f4" stroke-width="12"/><path d="M159 93 L158 65" stroke="#777" stroke-width="19"/><path d="M869 338 L907 327" stroke="#555" stroke-width="13"/><path d="M1136 316 L1153 350" stroke="#f4f4f4" stroke-width="13"/><path d="M177 114 L195 146" stroke="#fff" stroke-width="13"/><path d="M460 323 L438 305" stroke="#fff" stroke-width="13"/><path d="M181 214 L169 198" stroke="#777" stroke-width="18"/><path d="M198 591 L172 584" stroke="#fff" stroke-width="18"/><path d="M122 84 L100 83" stroke="#fff" stroke-width="13"/><path d="M1073 427 L1063 443" stroke="#fff" stroke-width="13"/><path d="M750 57 L778 73" stroke="#fff" stroke-width="17"/><path d="M308 112 L294 124" stroke="#fff" stroke-width="17"/><path d="M461 505 L477 493" stroke="#fff" stroke-width="18"/><path d="M153 413 L141 394" stroke="#999" stroke-width="16"/><path d="M383 229 L376 209" stroke="#777" stroke-width="19"/><path d="M73 508 L86 486" stroke="#fff" stroke-width="16"/><path d="M1078 422 L1088 387" stroke="#999" stroke-width="20"/><path d="M506 380 L498 413" stroke="#fff" stroke-width="17"/><path d="M420 332 L436 354" stroke="#777" stroke-width="17"/><path d="M465 115 L453 152" stroke="#777" stroke-width="13"/><path d="M787 134 L804 122" stroke="#999" stroke-width="17"/><path d="M83 585 L86 554" stroke="#777" stroke-width="16"/><path d="M749 381 L719 394" stroke="#fff" stroke-width="15"/><path d="M184 598 L186 576" stroke="#777" stroke-width="15"/><path d="M393 459 L379 446" stroke="#999" stroke-width="13"/><path d="M165 590 L187 616" stroke="#fff" stroke-width="16"/><path d="M821 330 L857 341" stroke="#777" stroke-width="20"/><path d="M180 429 L146 430" stroke="#f4f4f4" stroke-width="16"/><path d="M882 202 L888 169" stroke="#555" stroke-width="15"/><path d="M135 413 L150 388" stroke="#555" stroke-width="15"/><path d="M637 87 L669 104" stroke="#fff" stroke-width="16"/><path d="M715 80 L735 74" stroke="#999" stroke-width="19"/><path d="M398 257 L379 233" stroke="#fff" stroke-width="16"/><path d="M1073 367 L1108 369" stroke="#f4f4f4" stroke-width="16"/><path d="M549 263 L522 235" stroke="#777" stroke-width="14"/><path d="M397 160 L372 129" stroke="#f4f4f4" stroke-width="14"/><path d="M115 456 L143 453" stroke="#777" stroke-width="16"/><path d="M325 614 L302 595" stroke="#f4f4f4" stroke-width="15"/><path d="M231 271 L261 265" stroke="#fff" stroke-width="17"/><path d="M601 100 L596 134" stroke="#777" stroke-width="13"/><path d="M914 93 L892 90" stroke="#fff" stroke-width="14"/><path d="M188 244 L206 274" stroke="#999" stroke-width="15"/><path d="M619 184 L629 165" stroke="#999" stroke-width="16"/><path d="M220 564 L192 565" stroke="#fff" stroke-width="19"/><path d="M152 537 L136 572" stroke="#999" stroke-width="18"/><path d="M863 256 L832 245" stroke="#555" stroke-width="17"/><path d="M751 351 L726 361" stroke="#f4f4f4" stroke-width="14"/><path d="M229 252 L221 219" stroke="#fff" stroke-width="12"/><path d="M480 267 L502 248" stroke="#999" stroke-width="15"/><path d="M123 558 L157 570" stroke="#555" stroke-width="19"/><path d="M499 333 L528 306" stroke="#f4f4f4" stroke-width="19"/><path d="M311 585 L307 551" stroke="#777" stroke-width="13"/><path d="M424 426 L394 441" stroke="#555" stroke-width="18"/><path d="M676 249 L646 251" stroke="#555" stroke-width="14"/><path d="M134 170 L151 159" stroke="#f4f4f4" stroke-width="16"/><path d="M684 300 L669 323" stroke="#777" stroke-width="17"/><path d="M746 419 L761 399" stroke="#777" stroke-width="20"/><path d="M1001 324 L1002 353" stroke="#fff" stroke-width="18"/><path d="M629 50 L607 57" stroke="#fff" stroke-width="18"/><path d="M463 617 L424 617" stroke="#999" stroke-width="15"/><path d="M106 649 L97 610" stroke="#fff" stroke-width="16"/><path d="M904 147 L922 139" stroke="#777" stroke-width="15"/><path d="M164 205 L172 242" stroke="#fff" stroke-width="17"/><path d="M478 574 L456 575" stroke="#fff" stroke-width="17"/><path d="M278 510 L274 528" stroke="#fff" stroke-width="14"/><path d="M508 444 L530 445" stroke="#f4f4f4" stroke-width="13"/><path d="M944 424 L974 427" stroke="#777" stroke-width="13"/><path d="M244 261 L262 284" stroke="#555" stroke-width="13"/><path d="M428 646 L444 618" stroke="#f4f4f4" stroke-width="20"/><path d="M363 653 L399 649" stroke="#f4f4f4" stroke-width="17"/><path d="M808 113 L805 93" stroke="#555" stroke-width="18"/><path d="M354 431 L317 434" stroke="#fff" stroke-width="19"/><path d="M361 333 L386 321" stroke="#555" stroke-width="17"/><path d="M685 109 L682 130" stroke="#fff" stroke-width="13"/><path d="M735 365 L758 388" stroke="#999" stroke-width="18"/><path d="M1076 442 L1083 421" stroke="#f4f4f4" stroke-width="13"/><path d="M552 434 L577 416" stroke="#fff" stroke-width="17"/><path d="M364 434 L374 404" stroke="#777" stroke-width="16"/><path d="M547 359 L543 328" stroke="#999" stroke-width="17"/><path d="M1068 320 L1083 333" stroke="#555" stroke-width="12"/><path d="M125 428 L109 438" stroke="#999" stroke-width="14"/><path d="M730 144 L752 169" stroke="#fff" stroke-width="19"/><path d="M963 49 L992 70" stroke="#fff" stroke-width="13"/><path d="M129 330 L123 304" stroke="#f4f4f4" stroke-width="14"/><path d="M1014 439 L984 462" stroke="#fff" stroke-width="14"/><path d="M1058 252 L1059 270" stroke="#f4f4f4" stroke-width="18"/><path d="M968 48 L960 19" stroke="#999" stroke-width="14"/><path d="M69 141 L80 124" stroke="#999" stroke-width="18"/><path d="M594 173 L606 154" stroke="#555" stroke-width="19"/><path d="M954 377 L938 387" stroke="#999" stroke-width="16"/><path d="M466 304 L488 276" stroke="#999" stroke-width="19"/><path d="M881 127 L880 106" stroke="#555" stroke-width="15"/><path d="M1093 369 L1110 399" stroke="#fff" stroke-width="16"/><path d="M433 431 L409 457" stroke="#f4f4f4" stroke-width="14"/><path d="M122 363 L100 366" stroke="#999" stroke-width="19"/><path d="M150 654 L119 645" stroke="#f4f4f4" stroke-width="16"/><path d="M834 324 L847 340" stroke="#999" stroke-width="16"/><path d="M1027 181 L1037 143" stroke="#555" stroke-width="17"/><path d="M944 147 L910 132" stroke="#f4f4f4" stroke-width="20"/><path d="M1070 81 L1069 53" stroke="#999" stroke-width="16"/><path d="M1001 167 L1018 184" stroke="#777" stroke-width="12"/><path d="M649 375 L638 345" stroke="#777" stroke-width="19"/><path d="M994 62 L1018 65" stroke="#fff" stroke-width="15"/><path d="M430 630 L448 606" stroke="#fff" stroke-width="19"/><path d="M927 255 L922 277" stroke="#555" stroke-width="18"/><path d="M129 386 L148 394" stroke="#fff" stroke-width="12"/><path d="M338 55 L367 42" stroke="#777" stroke-width="13"/><path d="M980 420 L996 402" stroke="#555" stroke-width="12"/><path d="M135 492 L113 505" stroke="#fff" stroke-width="17"/><path d="M390 459 L415 489" stroke="#999" stroke-width="17"/><path d="M252 571 L234 561" stroke="#999" stroke-width="14"/><path d="M87 625 L110 644" stroke="#555" stroke-width="15"/><path d="M838 282 L857 286" stroke="#fff" stroke-width="20"/><path d="M292 495 L319 474" stroke="#555" stroke-width="20"/><path d="M183 643 L149 647" stroke="#555" stroke-width="12"/><path d="M155 583 L137 594" stroke="#fff" stroke-width="15"/><path d="M560 378 L592 391" stroke="#fff" stroke-width="17"/><path d="M805 318 L816 334" stroke="#fff" stroke-width="17"/><path d="M108 454 L120 435" stroke="#555" stroke-width="13"/><path d="M537 324 L565 318" stroke="#f4f4f4" stroke-width="19"/><path d="M770 51 L775 16" stroke="#777" stroke-width="16"/><path d="M1076 289 L1072 314" stroke="#fff" stroke-width="19"/><path d="M119 628 L106 662" stroke="#999" stroke-width="19"/><path d="M754 223 L770 197" stroke="#f4f4f4" stroke-width="18"/><path d="M671 337 L642 335" stroke="#555" stroke-width="18"/><path d="M880 192 L914 188" stroke="#777" stroke-width="14"/><path d="M387 613 L420 612" stroke="#777" stroke-width="20"/><path d="M155 129 L171 144" stroke="#999" stroke-width="19"/><path d="M273 607 L278 630" stroke="#f4f4f4" stroke-width="15"/><path d="M501 412 L526 405" stroke="#f4f4f4" stroke-width="13"/><path d="M513 173 L542 149" stroke="#fff" stroke-width="13"/><path d="M368 430 L334 431" stroke="#f4f4f4" stroke-width="18"/><path d="M204 132 L197 154" stroke="#999" stroke-width="14"/><path d="M1049 428 L1079 429" stroke="#999" stroke-width="13"/><path d="M628 230 L596 243" stroke="#fff" stroke-width="17"/><path d="M818 274 L792 263" stroke="#f4f4f4" stroke-width="13"/><path d="M948 224 L934 236" stroke="#999" stroke-width="16"/><path d="M976 441 L998 458" stroke="#fff" stroke-width="15"/><path d="M899 113 L920 131" stroke="#fff" stroke-width="20"/><path d="M230 96 L259 68" stroke="#fff" stroke-width="15"/><path d="M616 80 L602 93" stroke="#555" stroke-width="19"/><path d="M568 110 L571 92" stroke="#777" stroke-width="13"/><path d="M269 522 L262 501" stroke="#999" stroke-width="13"/><path d="M913 234 L901 208" stroke="#fff" stroke-width="17"/><path d="M227 225 L203 210" stroke="#fff" stroke-width="12"/><path d="M451 301 L487 285" stroke="#fff" stroke-width="14"/><path d="M319 427 L314 396" stroke="#fff" stroke-width="14"/><path d="M803 86 L808 117" stroke="#999" stroke-width="14"/><path d="M443 616 L460 603" stroke="#777" stroke-width="18"/><path d="M262 566 L251 531" stroke="#fff" stroke-width="13"/><path d="M895 97 L918 121" stroke="#fff" stroke-width="12"/><path d="M109 131 L89 136" stroke="#fff" stroke-width="19"/><path d="M797 353 L809 331" stroke="#999" stroke-width="17"/><path d="M374 79 L382 103" stroke="#fff" stroke-width="15"/><path d="M696 143 L674 146" stroke="#fff" stroke-width="14"/><path d="M350 356 L385 350" stroke="#999" stroke-width="16"/><path d="M990 272 L973 265" stroke="#555" stroke-width="14"/><path d="M608 348 L577 356" stroke="#777" stroke-width="13"/><path d="M680 300 L708 309" stroke="#999" stroke-width="13"/><path d="M691 85 L712 95" stroke="#fff" stroke-width="17"/><path d="M941 407 L928 385" stroke="#fff" stroke-width="14"/><path d="M97 496 L112 472" stroke="#f4f4f4" stroke-width="14"/><path d="M678 240 L691 203" stroke="#fff" stroke-width="13"/><path d="M175 364 L140 363" stroke="#777" stroke-width="18"/><path d="M234 46 L219 76" stroke="#555" stroke-width="14"/><path d="M595 188 L590 218" stroke="#999" stroke-width="19"/><path d="M763 128 L771 91" stroke="#f4f4f4" stroke-width="19"/><path d="M198 295 L192 321" stroke="#555" stroke-width="18"/><path d="M977 366 L1013 359" stroke="#999" stroke-width="15"/><path d="M666 178 L670 148" stroke="#f4f4f4" stroke-width="12"/><path d="M78 655 L43 672" stroke="#fff" stroke-width="19"/><path d="M89 163 L120 155" stroke="#999" stroke-width="16"/><path d="M383 226 L385 245" stroke="#777" stroke-width="20"/><path d="M743 272 L763 295" stroke="#999" stroke-width="14"/><path d="M871 138 L909 137" stroke="#f4f4f4" stroke-width="14"/><path d="M396 311 L370 294" stroke="#fff" stroke-width="20"/><path d="M237 274 L230 311" stroke="#f4f4f4" stroke-width="15"/><path d="M294 614 L279 578" stroke="#fff" stroke-width="17"/><path d="M189 449 L208 464" stroke="#f4f4f4" stroke-width="16"/><path d="M190 266 L220 271" stroke="#555" stroke-width="14"/><path d="M803 259 L775 279" stroke="#555" stroke-width="13"/><path d="M698 137 L679 152" stroke="#555" stroke-width="13"/><path d="M852 251 L852 273" stroke="#f4f4f4" stroke-width="13"/><path d="M498 256 L474 281" stroke="#555" stroke-width="13"/><path d="M881 302 L897 278" stroke="#777" stroke-width="19"/><path d="M862 52 L894 64" stroke="#777" stroke-width="17"/><path d="M380 653 L396 643" stroke="#777" stroke-width="18"/><path d="M292 191 L278 170" stroke="#f4f4f4" stroke-width="19"/><path d="M452 497 L483 491" stroke="#fff" stroke-width="19"/><path d="M897 273 L934 276" stroke="#555" stroke-width="13"/><path d="M490 131 L501 109" stroke="#999" stroke-width="19"/><path d="M884 78 L855 53" stroke="#fff" stroke-width="13"/><path d="M263 574 L243 589" stroke="#f4f4f4" stroke-width="14"/><path d="M1029 156 L1010 184" stroke="#999" stroke-width="17"/><path d="M1100 109 L1127 118" stroke="#f4f4f4" stroke-width="14"/><path d="M733 87 L740 69" stroke="#555" stroke-width="15"/><path d="M390 263 L410 280" stroke="#777" stroke-width="17"/><path d="M94 244 L91 205" stroke="#555" stroke-width="13"/><path d="M556 206 L520 215" stroke="#777" stroke-width="15"/><path d="M874 389 L852 403" stroke="#f4f4f4" stroke-width="14"/><path d="M1018 336 L1033 317" stroke="#555" stroke-width="19"/><path d="M101 673 L105 694" stroke="#555" stroke-width="13"/><path d="M1154 348 L1171 367" stroke="#fff" stroke-width="15"/><path d="M935 395 L936 415" stroke="#f4f4f4" stroke-width="12"/><path d="M147 380 L174 361" stroke="#777" stroke-width="17"/><path d="M195 51 L219 64" stroke="#999" stroke-width="14"/><path d="M98 606 L96 634" stroke="#fff" stroke-width="16"/><path d="M587 115 L559 95" stroke="#f4f4f4" stroke-width="19"/><path d="M951 166 L969 157" stroke="#777" stroke-width="16"/><path d="M1155 200 L1149 168" stroke="#fff" stroke-width="14"/><path d="M395 78 L414 76" stroke="#fff" stroke-width="17"/><path d="M581 303 L602 319" stroke="#fff" stroke-width="19"/><path d="M307 158 L296 175" stroke="#fff" stroke-width="12"/><path d="M618 340 L640 324" stroke="#fff" stroke-width="13"/><path d="M58 270 L40 255" stroke="#777" stroke-width="13"/><path d="M662 229 L649 252" stroke="#777" stroke-width="15"/><path d="M817 247 L840 274" stroke="#f4f4f4" stroke-width="17"/><path d="M984 341 L1016 349" stroke="#555" stroke-width="16"/><path d="M783 64 L778 26" stroke="#fff" stroke-width="19"/><path d="M860 151 L878 125" stroke="#f4f4f4" stroke-width="15"/><path d="M177 372 L208 351" stroke="#f4f4f4" stroke-width="20"/><path d="M1016 55 L1001 20" stroke="#999" stroke-width="19"/><path d="M48 179 L13 166" stroke="#f4f4f4" stroke-width="13"/><path d="M259 202 L294 211" stroke="#999" stroke-width="12"/><path d="M794 394 L814 415" stroke="#fff" stroke-width="18"/><path d="M542 266 L524 261" stroke="#f4f4f4" stroke-width="19"/><path d="M433 178 L414 210" stroke="#f4f4f4" stroke-width="15"/><path d="M223 502 L206 488" stroke="#f4f4f4" stroke-width="19"/><path d="M385 346 L373 361" stroke="#fff" stroke-width="19"/><path d="M923 48 L941 36" stroke="#f4f4f4" stroke-width="15"/><path d="M68 576 L92 603" stroke="#555" stroke-width="13"/><path d="M1057 163 L1048 179" stroke="#555" stroke-width="17"/><path d="M963 371 L932 376" stroke="#777" stroke-width="18"/><path d="M168 50 L179 70" stroke="#fff" stroke-width="20"/><path d="M185 66 L155 65" stroke="#f4f4f4" stroke-width="13"/><path d="M320 140 L300 144" stroke="#fff" stroke-width="18"/><path d="M895 101 L904 126" stroke="#f4f4f4" stroke-width="14"/><path d="M1048 101 L1080 113" stroke="#555" stroke-width="15"/><path d="M54 363 L84 383" stroke="#555" stroke-width="18"/><path d="M1085 208 L1060 216" stroke="#777" stroke-width="17"/><path d="M70 230 L52 221" stroke="#f4f4f4" stroke-width="15"/><path d="M171 670 L177 697" stroke="#fff" stroke-width="19"/><path d="M433 605 L409 597" stroke="#555" stroke-width="19"/><path d="M390 450 L384 410" stroke="#fff" stroke-width="18"/><path d="M644 120 L660 104" stroke="#555" stroke-width="18"/><path d="M1013 123 L1019 140" stroke="#fff" stroke-width="16"/><path d="M253 252 L238 232" stroke="#f4f4f4" stroke-width="15"/><path d="M275 123 L246 122" stroke="#555" stroke-width="16"/><path d="M723 191 L738 214" stroke="#fff" stroke-width="19"/><path d="M950 299 L934 320" stroke="#777" stroke-width="15"/><path d="M135 617 L161 592" stroke="#555" stroke-width="15"/><path d="M337 282 L321 292" stroke="#777" stroke-width="18"/><path d="M870 89 L876 112" stroke="#fff" stroke-width="14"/><path d="M942 398 L924 377" stroke="#fff" stroke-width="16"/><path d="M171 266 L155 293" stroke="#999" stroke-width="17"/><path d="M446 474 L449 446" stroke="#999" stroke-width="12"/><path d="M826 109 L794 106" stroke="#f4f4f4" stroke-width="14"/><path d="M461 351 L486 352" stroke="#f4f4f4" stroke-width="16"/><path d="M96 451 L83 436" stroke="#777" stroke-width="18"/><path d="M270 623 L280 586" stroke="#999" stroke-width="12"/><path d="M108 596 L123 632" stroke="#fff" stroke-width="15"/><path d="M497 545 L491 523" stroke="#fff" stroke-width="14"/><path d="M229 225 L242 190" stroke="#f4f4f4" stroke-width="14"/><path d="M491 391 L453 384" stroke="#fff" stroke-width="19"/><path d="M730 312 L747 328" stroke="#fff" stroke-width="17"/><path d="M356 288 L388 269" stroke="#555" stroke-width="13"/><path d="M356 525 L368 544" stroke="#fff" stroke-width="19"/><path d="M449 83 L465 100" stroke="#fff" stroke-width="18"/><path d="M614 318 L626 295" stroke="#f4f4f4" stroke-width="17"/><path d="M159 58 L134 61" stroke="#555" stroke-width="17"/><path d="M559 157 L584 157" stroke="#f4f4f4" stroke-width="14"/><path d="M124 422 L110 396" stroke="#999" stroke-width="14"/><path d="M83 65 L100 55" stroke="#555" stroke-width="13"/><path d="M313 84 L337 82" stroke="#fff" stroke-width="14"/><path d="M415 340 L391 334" stroke="#f4f4f4" stroke-width="15"/><path d="M728 262 L760 270" stroke="#fff" stroke-width="14"/><path d="M1152 407 L1162 427" stroke="#555" stroke-width="13"/><path d="M926 421 L925 385" stroke="#777" stroke-width="14"/><path d="M146 234 L171 250" stroke="#777" stroke-width="13"/><path d="M829 339 L812 344" stroke="#f4f4f4" stroke-width="12"/><path d="M1059 289 L1047 273" stroke="#555" stroke-width="14"/><path d="M629 288 L644 311" stroke="#fff" stroke-width="20"/><path d="M440 208 L448 229" stroke="#fff" stroke-width="15"/><path d="M199 317 L185 304" stroke="#999" stroke-width="15"/><path d="M750 164 L770 134" stroke="#777" stroke-width="16"/><path d="M130 550 L104 539" stroke="#555" stroke-width="15"/><path d="M134 664 L157 684" stroke="#fff" stroke-width="16"/><path d="M59 418 L37 448" stroke="#fff" stroke-width="19"/><path d="M143 124 L170 115" stroke="#fff" stroke-width="16"/><path d="M612 99 L627 115" stroke="#777" stroke-width="14"/><path d="M1127 173 L1113 151" stroke="#999" stroke-width="16"/><path d="M104 306 L94 290" stroke="#f4f4f4" stroke-width="19"/><path d="M1135 228 L1101 233" stroke="#fff" stroke-width="17"/><path d="M585 67 L580 31" stroke="#f4f4f4" stroke-width="14"/><path d="M84 519 L109 526" stroke="#f4f4f4" stroke-width="19"/><path d="M65 160 L50 176" stroke="#fff" stroke-width="15"/><path d="M473 271 L454 294" stroke="#fff" stroke-width="12"/><path d="M530 375 L530 354" stroke="#fff" stroke-width="19"/><path d="M319 69 L307 104" stroke="#555" stroke-width="13"/><path d="M1013 417 L1019 380" stroke="#999" stroke-width="15"/><path d="M265 321 L235 323" stroke="#f4f4f4" stroke-width="17"/><path d="M171 504 L153 509" stroke="#999" stroke-width="15"/><path d="M1086 437 L1100 422" stroke="#fff" stroke-width="19"/><path d="M449 556 L455 594" stroke="#777" stroke-width="14"/><path d="M1081 137 L1110 133" stroke="#999" stroke-width="19"/><path d="M213 580 L231 607" stroke="#999" stroke-width="17"/><path d="M74 336 L58 318" stroke="#555" stroke-width="14"/><path d="M156 72 L144 35" stroke="#f4f4f4" stroke-width="16"/><path d="M663 371 L693 371" stroke="#777" stroke-width="13"/><path d="M1049 295 L1030 306" stroke="#fff" stroke-width="18"/><path d="M781 181 L780 142" stroke="#fff" stroke-width="15"/><path d="M1083 198 L1113 204" stroke="#f4f4f4" stroke-width="18"/><path d="M179 394 L165 375" stroke="#fff" stroke-width="18"/><path d="M941 409 L963 413" stroke="#999" stroke-width="14"/><path d="M339 372 L310 394" stroke="#fff" stroke-width="15"/><path d="M951 431 L948 451" stroke="#f4f4f4" stroke-width="15"/><path d="M427 496 L446 506" stroke="#555" stroke-width="18"/><path d="M142 316 L123 337" stroke="#fff" stroke-width="18"/><path d="M664 133 L651 102" stroke="#999" stroke-width="17"/><path d="M842 387 L827 369" stroke="#fff" stroke-width="18"/><path d="M575 62 L597 88" stroke="#777" stroke-width="13"/><path d="M469 646 L450 628" stroke="#fff" stroke-width="13"/><path d="M1059 63 L1033 48" stroke="#f4f4f4" stroke-width="12"/><path d="M83 84 L67 62" stroke="#fff" stroke-width="19"/><path d="M468 568 L478 599" stroke="#f4f4f4" stroke-width="13"/><path d="M494 166 L516 198" stroke="#555" stroke-width="18"/><path d="M66 480 L71 509" stroke="#fff" stroke-width="14"/><path d="M618 359 L653 357" stroke="#999" stroke-width="15"/><path d="M406 110 L394 78" stroke="#777" stroke-width="17"/><path d="M265 205 L244 212" stroke="#777" stroke-width="14"/><path d="M211 183 L228 162" stroke="#555" stroke-width="19"/><path d="M845 124 L807 130" stroke="#fff" stroke-width="15"/><path d="M319 606 L297 585" stroke="#999" stroke-width="14"/><path d="M90 393 L111 408" stroke="#fff" stroke-width="19"/><path d="M390 610 L361 602" stroke="#999" stroke-width="16"/><path d="M802 310 L819 277" stroke="#777" stroke-width="15"/><path d="M523 231 L506 204" stroke="#999" stroke-width="20"/><path d="M286 595 L259 582" stroke="#999" stroke-width="15"/><path d="M598 349 L605 331" stroke="#777" stroke-width="18"/><path d="M450 325 L422 302" stroke="#999" stroke-width="19"/><path d="M376 550 L398 571" stroke="#f4f4f4" stroke-width="17"/><path d="M755 262 L760 281" stroke="#999" stroke-width="14"/><path d="M257 661 L276 653" stroke="#777" stroke-width="18"/><path d="M419 255 L438 248" stroke="#fff" stroke-width="18"/><path d="M305 196 L324 186" stroke="#999" stroke-width="18"/><path d="M468 390 L442 364" stroke="#777" stroke-width="17"/><path d="M195 488 L214 519" stroke="#555" stroke-width="14"/><path d="M413 466 L407 483" stroke="#777" stroke-width="14"/><path d="M556 450 L565 466" stroke="#777" stroke-width="13"/><path d="M858 402 L847 382" stroke="#777" stroke-width="16"/><path d="M596 410 L588 388" stroke="#999" stroke-width="13"/><path d="M691 177 L704 141" stroke="#777" stroke-width="14"/><path d="M233 338 L252 330" stroke="#999" stroke-width="19"/><path d="M1105 159 L1078 177" stroke="#f4f4f4" stroke-width="13"/><path d="M435 56 L435 24" stroke="#fff" stroke-width="17"/><path d="M999 442 L1023 460" stroke="#fff" stroke-width="16"/><path d="M635 213 L668 231" stroke="#fff" stroke-width="18"/><path d="M284 616 L251 618" stroke="#555" stroke-width="17"/><path d="M513 304 L485 304" stroke="#999" stroke-width="14"/><path d="M1090 381 L1106 372" stroke="#fff" stroke-width="14"/><path d="M262 319 L248 299" stroke="#777" stroke-width="12"/><path d="M300 467 L269 491" stroke="#777" stroke-width="13"/><path d="M119 471 L110 488" stroke="#fff" stroke-width="14"/><path d="M1023 333 L1027 363" stroke="#555" stroke-width="15"/><path d="M247 502 L234 476" stroke="#555" stroke-width="20"/><path d="M160 454 L187 472" stroke="#f4f4f4" stroke-width="19"/><path d="M749 62 L773 61" stroke="#555" stroke-width="15"/><path d="M230 407 L216 371" stroke="#fff" stroke-width="19"/><path d="M886 57 L910 51" stroke="#fff" stroke-width="19"/><path d="M277 171 L299 156" stroke="#fff" stroke-width="14"/><path d="M945 251 L941 279" stroke="#f4f4f4" stroke-width="17"/><path d="M740 205 L757 189" stroke="#999" stroke-width="18"/><path d="M433 139 L441 107" stroke="#fff" stroke-width="13"/><path d="M230 163 L196 161" stroke="#999" stroke-width="19"/><path d="M353 277 L358 253" stroke="#777" stroke-width="16"/><path d="M352 168 L371 168" stroke="#777" stroke-width="16"/><path d="M496 151 L519 142" stroke="#f4f4f4" stroke-width="17"/><path d="M350 289 L390 284" stroke="#999" stroke-width="14"/><path d="M137 656 L141 620" stroke="#f4f4f4" stroke-width="18"/><path d="M731 343 L747 326" stroke="#f4f4f4" stroke-width="15"/><path d="M1108 245 L1076 237" stroke="#fff" stroke-width="16"/><path d="M1067 447 L1094 457" stroke="#999" stroke-width="18"/><path d="M228 538 L227 517" stroke="#777" stroke-width="16"/><path d="M438 524 L442 557" stroke="#555" stroke-width="14"/><path d="M1126 88 L1129 62" stroke="#fff" stroke-width="19"/><path d="M685 326 L686 359" stroke="#555" stroke-width="16"/><path d="M319 494 L318 473" stroke="#999" stroke-width="14"/><path d="M184 243 L200 277" stroke="#fff" stroke-width="19"/><path d="M72 473 L59 490" stroke="#999" stroke-width="18"/><path d="M495 530 L525 529" stroke="#999" stroke-width="17"/><path d="M206 606 L229 619" stroke="#f4f4f4" stroke-width="18"/><path d="M342 671 L331 654" stroke="#fff" stroke-width="13"/><path d="M135 632 L153 622" stroke="#f4f4f4" stroke-width="17"/><path d="M212 154 L225 127" stroke="#fff" stroke-width="13"/><path d="M496 378 L516 386" stroke="#fff" stroke-width="19"/><path d="M64 346 L34 356" stroke="#f4f4f4" stroke-width="12"/><path d="M1033 322 L1011 346" stroke="#999" stroke-width="20"/><path d="M117 110 L110 134" stroke="#999" stroke-width="18"/><path d="M279 138 L286 165" stroke="#555" stroke-width="14"/><path d="M486 81 L491 45" stroke="#777" stroke-width="20"/><path d="M1097 226 L1092 204" stroke="#fff" stroke-width="16"/><path d="M371 150 L392 146" stroke="#555" stroke-width="20"/><path d="M114 393 L148 411" stroke="#fff" stroke-width="19"/><path d="M173 621 L189 637" stroke="#fff" stroke-width="15"/><path d="M506 263 L510 298" stroke="#999" stroke-width="18"/><path d="M1094 147 L1113 168" stroke="#777" stroke-width="13"/><path d="M156 93 L130 85" stroke="#fff" stroke-width="14"/><path d="M1024 334 L1018 310" stroke="#f4f4f4" stroke-width="15"/><path d="M1060 164 L1084 173" stroke="#f4f4f4" stroke-width="17"/><path d="M330 604 L334 629" stroke="#fff" stroke-width="14"/><path d="M386 527 L382 551" stroke="#fff" stroke-width="17"/><path d="M731 394 L718 373" stroke="#fff" stroke-width="19"/><path d="M62 154 L31 140" stroke="#555" stroke-width="20"/><path d="M335 599 L305 603" stroke="#777" stroke-width="20"/><path d="M1115 261 L1104 243" stroke="#555" stroke-width="12"/><path d="M1067 383 L1031 384" stroke="#777" stroke-width="20"/><path d="M942 205 L919 186" stroke="#fff" stroke-width="19"/><path d="M551 379 L531 410" stroke="#fff" stroke-width="19"/><path d="M450 236 L452 264" stroke="#fff" stroke-width="12"/><path d="M215 446 L190 417" stroke="#777" stroke-width="20"/><path d="M1025 210 L1006 214" stroke="#555" stroke-width="16"/><path d="M971 322 L987 289" stroke="#f4f4f4" stroke-width="17"/><path d="M517 209 L536 237" stroke="#fff" stroke-width="13"/><path d="M1151 155 L1178 151" stroke="#fff" stroke-width="17"/><path d="M1033 314 L1057 319" stroke="#999" stroke-width="16"/><path d="M522 452 L517 414" stroke="#fff" stroke-width="20"/><path d="M943 110 L956 90" stroke="#f4f4f4" stroke-width="18"/><path d="M1074 274 L1078 249" stroke="#fff" stroke-width="15"/><path d="M197 673 L229 665" stroke="#f4f4f4" stroke-width="17"/><path d="M463 349 L470 366" stroke="#777" stroke-width="17"/><path d="M689 329 L691 294" stroke="#f4f4f4" stroke-width="13"/><path d="M105 110 L72 96" stroke="#f4f4f4" stroke-width="14"/><path d="M908 290 L924 301" stroke="#555" stroke-width="16"/><path d="M800 90 L772 86" stroke="#f4f4f4" stroke-width="17"/><path d="M440 353 L466 376" stroke="#555" stroke-width="16"/><path d="M1081 117 L1108 115" stroke="#fff" stroke-width="14"/><path d="M482 283 L490 319" stroke="#999" stroke-width="16"/><path d="M754 298 L745 268" stroke="#fff" stroke-width="17"/><path d="M317 170 L282 184" stroke="#fff" stroke-width="19"/><path d="M514 66 L545 50" stroke="#fff" stroke-width="18"/><path d="M1058 136 L1069 121" stroke="#f4f4f4" stroke-width="14"/><path d="M202 363 L180 333" stroke="#fff" stroke-width="20"/><path d="M1100 270 L1124 259" stroke="#fff" stroke-width="17"/><path d="M689 89 L662 70" stroke="#f4f4f4" stroke-width="14"/><path d="M414 647 L429 673" stroke="#fff" stroke-width="19"/><path d="M873 334 L871 306" stroke="#777" stroke-width="18"/><path d="M219 429 L195 408" stroke="#f4f4f4" stroke-width="14"/><path d="M327 208 L307 235" stroke="#f4f4f4" stroke-width="15"/><path d="M379 174 L373 142" stroke="#fff" stroke-width="17"/><path d="M381 347 L380 381" stroke="#f4f4f4" stroke-width="17"/><path d="M731 261 L701 253" stroke="#999" stroke-width="17"/><path d="M347 644 L323 646" stroke="#fff" stroke-width="13"/><path d="M536 93 L498 80" stroke="#fff" stroke-width="19"/><path d="M620 348 L656 334" stroke="#fff" stroke-width="13"/><path d="M222 364 L234 401" stroke="#999" stroke-width="15"/><path d="M149 109 L173 107" stroke="#777" stroke-width="16"/><path d="M651 110 L674 79" stroke="#555" stroke-width="18"/><path d="M1023 291 L1007 313" stroke="#fff" stroke-width="15"/><path d="M939 123 L966 134" stroke="#f4f4f4" stroke-width="17"/><path d="M617 161 L597 181" stroke="#555" stroke-width="16"/><path d="M253 607 L219 619" stroke="#999" stroke-width="13"/><path d="M315 187 L330 199" stroke="#fff" stroke-width="15"/><path d="M574 357 L584 380" stroke="#999" stroke-width="12"/><path d="M1131 175 L1133 149" stroke="#777" stroke-width="15"/><path d="M681 150 L660 149" stroke="#f4f4f4" stroke-width="16"/><path d="M235 167 L263 179" stroke="#999" stroke-width="16"/><path d="M762 323 L784 295" stroke="#999" stroke-width="16"/><path d="M259 48 L278 26" stroke="#555" stroke-width="17"/><path d="M284 171 L279 140" stroke="#fff" stroke-width="15"/><path d="M487 283 L477 312" stroke="#777" stroke-width="15"/><path d="M979 439 L972 475" stroke="#fff" stroke-width="14"/><path d="M263 446 L284 439" stroke="#fff" stroke-width="16"/><path d="M858 61 L861 36" stroke="#fff" stroke-width="17"/><path d="M894 334 L907 358" stroke="#f4f4f4" stroke-width="12"/><path d="M807 115 L819 129" stroke="#999" stroke-width="16"/><path d="M124 682 L110 701" stroke="#777" stroke-width="19"/><path d="M586 363 L605 345" stroke="#fff" stroke-width="20"/><path d="M837 322 L848 354" stroke="#fff" stroke-width="18"/><path d="M481 335 L473 357" stroke="#f4f4f4" stroke-width="17"/><path d="M572 70 L594 80" stroke="#f4f4f4" stroke-width="15"/><path d="M979 438 L1012 433" stroke="#fff" stroke-width="16"/><path d="M209 652 L200 634" stroke="#555" stroke-width="15"/><path d="M800 66 L806 88" stroke="#f4f4f4" stroke-width="16"/><path d="M206 666 L190 638" stroke="#555" stroke-width="13"/><path d="M80 560 Q260 500 490 520 M90 650 Q260 610 480 630" fill="none" stroke="#666" stroke-width="16"/><path d="M520 460 L520 1000 M565 470 L560 1000" fill="none" stroke="#888" stroke-width="14"/><path d="M400 820 L470 850 L440 900 M420 800 L500 880" fill="none" stroke="#777" stroke-width="14"/><path d="M620 440 Q580 700 610 900 Q650 990 760 1000" fill="none" stroke="#444" stroke-width="40"/><path d="M840 450 Q900 430 910 520 Q990 640 980 1000" fill="none" stroke="#4a4a4a" stroke-width="44"/><path d="M650 470 Q700 430 760 470 L780 560 Q760 600 690 590 Z" fill="#aaa" stroke="#666" stroke-width="14"/><path d="M640 560 L880 1000 M700 640 Q760 800 740 990 M800 560 L840 980" fill="none" stroke="#777" stroke-width="14"/><path d="M170 1000 L190 900 L230 840 L290 890 L300 1000 Z" fill="#777"/><path d="M180 960 L300 960" stroke="#444" stroke-width="30"/><path d="M40 1010 L1160 1010" stroke="#666" stroke-width="26"/><path d="M160 985 L520 995 M860 990 L1150 1000" stroke="#555" stroke-width="22"/></svg>
<div class="t" style="left:219.00px;top:55.47px;font-size:58.14px;color:#fa6b16;transform:scaleX(0.9180);">Scopus</div>
<div class="t" style="left:1890.50px;top:66.01px;font-size:51.60px;color:#2e2e2e;transform:scaleX(0.8228);">Search</div>
<div class="t" style="left:2108.50px;top:65.76px;font-size:51.31px;color:#2e2e2e;transform:scaleX(0.8674);">Lists</div>
<div class="t" style="left:2280.50px;top:65.76px;font-size:51.31px;color:#2e2e2e;transform:scaleX(0.8528);">Sources</div>
<div class="t" style="left:2522.90px;top:65.76px;font-size:51.31px;color:#2e2e2e;transform:scaleX(0.8368);">SciVal</div>
<div class="r" style="left:3057px;top:44px;width:377px;height:98px;background:#fff;border:3px solid #0c7dbb"></div>
<div class="t" style="left:3092.10px;top:68.14px;font-size:48.26px;color:#2e2e2e;transform:scaleX(0.9396);">Create account</div>
<div class="r" style="left:3474px;top:44px;width:213px;height:98px;background:#007bc0;"></div>
<div class="t" style="left:3508.50px;top:68.14px;font-size:48.26px;color:#fff;transform:scaleX(0.9765);-webkit-text-stroke:0.7px #fff;">Sign in</div>
<div class="r" style="left:124px;top:195px;width:3465px;height:125px;background:#eef6fa;"></div>
<div class="t" style="left:868.50px;top:244.17px;font-size:39.24px;color:#2e2e2e;transform:scaleX(0.9430);">Welcome to a more intuitive and efficient search experience.</div>
<div class="t" style="left:1868.10px;top:243.83px;font-size:39.54px;color:#2e2e2e;transform:scaleX(0.9034);">See what is new</div>
<div class="r" style="left:1868px;top:283px;width:259px;height:3px;background:#454545;"></div>
<div class="t" style="left:2768.90px;top:357.70px;font-size:41.57px;color:#2e2e2e;transform:scaleX(0.8658);">Advanced query</div>
<div class="r" style="left:3050px;top:357px;width:99px;height:48px;background:transparent;border:3px solid #6b6b6b;border-radius:24px"></div>
<div class="r" style="left:3061.4px;top:370.6px;width:19.6px;height:19.6px;border-radius:50%;background:#6b6b6b"></div>
<div class="r" style="left:854px;top:447px;width:849px;height:159px;background:#fff;border:2px solid #8c8c8c;border-bottom:4px solid #6a6a6a"></div>
<div class="t" style="left:894.50px;top:474.93px;font-size:36.34px;color:#0077c0;transform:scaleX(0.8871);">Search within</div>
<div class="t" style="left:894.50px;top:529.41px;font-size:42.15px;color:#2e2e2e;transform:scaleX(0.8771);">Article title, Abstract, Keywords</div>
<div class="r" style="left:1724px;top:447px;width:1426px;height:160px;background:#fff;border:2px solid #8c8c8c;border-bottom:4px solid #6a6a6a"></div>
<div class="t" style="left:1764.10px;top:478.63px;font-size:33.87px;color:#0077c0;transform:scaleX(0.9409);">Search documents</div>
<div class="t" style="left:1764.10px;top:528.40px;font-size:39.68px;color:#2e2e2e;transform:scaleX(0.9430);width:1456.94px;clip-path:inset(-40px 0 -40px -40px)">( smart AND sustainable AND cities ) AND ( digital AND technology ) OR ( information</div>
<div class="t" style="left:181.50px;top:590.13px;font-size:41.43px;color:#0077c0;transform:scaleX(0.8099);">Save search</div>
<div class="t" style="left:188.50px;top:690.50px;font-size:41.57px;color:#0077c0;transform:scaleX(0.8570);">Set search alert</div>
<div class="t" style="left:909.10px;top:689.78px;font-size:43.61px;color:#0077c0;transform:scaleX(0.8395);">Add search field</div>
<div class="t" style="left:2764.50px;top:690.71px;font-size:42.15px;color:#0077c0;transform:scaleX(0.8038);">Reset</div>
<div class="r" style="left:2912px;top:669px;width:238px;height:88px;background:#007bc0;"></div>
<div class="t" style="left:2947.50px;top:690.71px;font-size:42.15px;color:#fff;transform:scaleX(0.8095);-webkit-text-stroke:0.6px #fff;">Search</div>
<div class="r" style="left:1230px;top:767px;width:106px;height:51px;border-radius:26px;background:#007bc0"></div>
<div class="t" style="left:1251.50px;top:776.39px;font-size:33.43px;color:#fff;transform:scaleX(0.9375);-webkit-text-stroke:0.6px #fff;">Beta</div>
<div class="t" style="left:854.00px;top:826.24px;font-size:40.70px;color:#2e2e2e;transform:scaleX(0.9327);">Documents</div>
<div class="t" style="left:1125.50px;top:826.24px;font-size:40.70px;color:#2e2e2e;transform:scaleX(0.9228);">Preprints</div>
<div class="t" style="left:1355.50px;top:826.24px;font-size:40.70px;color:#2e2e2e;transform:scaleX(0.8847);">Patents</div>
<div class="t" style="left:1558.50px;top:826.24px;font-size:40.70px;color:#2e2e2e;transform:scaleX(0.8927);">Secondary documents</div>
<div class="t" style="left:2000.50px;top:826.24px;font-size:40.70px;color:#2e2e2e;transform:scaleX(0.8555);">Research data</div>
<div class="r" style="left:104px;top:888px;width:3504px;height:2px;background:#5a5a5a;"></div>
<div class="r" style="left:854px;top:883px;width:231px;height:7px;background:#222;"></div>
<div class="t" style="left:852.50px;top:940.74px;font-size:59.59px;color:#505050;transform:scaleX(0.9271);">1 135 documents found</div>
<div class="t" style="left:3309.50px;top:961.21px;font-size:38.37px;color:#0077c0;transform:scaleX(0.9346);">Analyze results</div>
<div class="t" style="left:125.20px;top:1054.55px;font-size:54.51px;color:#505050;transform:scaleX(0.8043);">Refine search</div>
<div class="r" style="left:854px;top:1066px;width:50px;height:50px;background:#fff;border:3px solid #6e6e6e"></div>
<div class="t" style="left:948.50px;top:1065.78px;font-size:43.61px;color:#0077c0;transform:scaleX(0.8504);">All</div>
<div class="t" style="left:1109.50px;top:1065.78px;font-size:43.61px;color:#0077c0;transform:scaleX(0.8451);">Export</div>
<div class="t" style="left:1335.50px;top:1065.78px;font-size:43.61px;color:#0077c0;transform:scaleX(0.8561);">Download</div>
<div class="t" style="left:1562.10px;top:1065.78px;font-size:43.61px;color:#0077c0;transform:scaleX(0.8548);">Citation overview</div>
<div class="t" style="left:1975.50px;top:1065.78px;font-size:43.61px;color:#0077c0;transform:scaleX(0.8809);">More</div>
<div class="t" style="left:2525.50px;top:1067.94px;font-size:40.70px;color:#0077c0;transform:scaleX(0.8844);">Show all abstracts</div>
<div class="t" style="left:2877.10px;top:1067.94px;font-size:40.70px;color:#2e2e2e;transform:scaleX(0.8865);">Sort by</div>
<div class="t" style="left:3012.20px;top:1067.94px;font-size:40.70px;color:#0077c0;transform:scaleX(0.8834);">Date (newest)</div>
<div class="r" style="left:3011px;top:1119px;width:348px;height:2px;background:#555;"></div>
<div class="r" style="left:3420px;top:1064px;width:67px;height:54px;background:#eaf4fa;border-bottom:4px solid #0077c0"></div>
<div class="r" style="left:124px;top:1179px;width:645px;height:121px;background:#fff;border:2px solid #9a9a9a;border-bottom:4px solid #6a6a6a"></div>
<div class="t" style="left:166.30px;top:1216.86px;font-size:39.97px;color:#6b6b6b;transform:scaleX(0.9279);">Search within results</div>
<div class="t" style="left:125.00px;top:1386.56px;font-size:51.31px;color:#505050;transform:scaleX(0.8879);">Filters</div>
<div class="t" style="left:123.10px;top:1492.24px;font-size:40.70px;color:#1f1f1f;transform:scaleX(0.8547);font-weight:bold;-webkit-text-stroke:0.65px #fff;">Year</div>
<div class="t" style="left:1030.10px;top:1181.16px;font-size:34.88px;color:#3c3c3c;transform:scaleX(0.9754);">Document title</div>
<div class="t" style="left:2250.10px;top:1181.66px;font-size:34.88px;color:#3c3c3c;transform:scaleX(0.9558);">Authors</div>
<div class="t" style="left:2794.50px;top:1181.66px;font-size:34.88px;color:#3c3c3c;transform:scaleX(0.9003);">Source</div>
<div class="t" style="left:3240.50px;top:1181.66px;font-size:34.88px;color:#3c3c3c;transform:scaleX(0.9007);">Year</div>
<div class="t" style="left:3437.50px;top:1181.66px;font-size:34.88px;color:#3c3c3c;transform:scaleX(0.9688);">Citations</div>
<div class="r" style="left:854px;top:1245px;width:2715px;height:3px;background:#1f1f1f;"></div>
<div class="t" style="left:1030.10px;top:1303.76px;font-size:34.88px;color:#3c3c3c;transform:scaleX(0.9339);">Article</div>
<div class="r" style="left:854px;top:1352px;width:50px;height:49px;background:#fff;border:3px solid #6e6e6e"></div>
<div class="t" style="left:923.00px;top:1361.93px;font-size:36.34px;color:#505050;transform:scaleX(0.8909);">1</div>
<div class="t" style="left:1030.10px;top:1359.47px;font-size:39.24px;color:#1f1f1f;transform:scaleX(0.9110);font-weight:bold;-webkit-text-stroke:0.63px #fff;">Deep learning-based optimization of energy utilization in IoT-</div>
<div class="t" style="left:1030.10px;top:1420.47px;font-size:39.24px;color:#1f1f1f;transform:scaleX(0.8932);font-weight:bold;-webkit-text-stroke:0.63px #fff;">enabled smart cities: A pathway to sustainable development</div>
<div class="t" style="left:1030.10px;top:1500.04px;font-size:40.70px;color:#0077c0;transform:scaleX(0.8838);">Show abstract</div>
<div class="t" style="left:1355.90px;top:1500.04px;font-size:40.70px;color:#0077c0;transform:scaleX(0.9037);">View at Publisher</div>
<div class="t" style="left:1736.10px;top:1500.04px;font-size:40.70px;color:#0077c0;transform:scaleX(0.8952);">Related documents</div>
<div class="t" style="left:2250.10px;top:1359.94px;font-size:40.70px;color:#2e2e2e;transform:scaleX(0.9199);">Aljohani, A.</div>
<div class="r" style="left:2251px;top:1398px;width:186px;height:2px;background:#2e2e2e;"></div>
<div class="t" style="left:2794.50px;top:1359.94px;font-size:40.70px;color:#2e2e2e;transform:scaleX(0.8782);">Energy Reports, 12, pp.</div>
<div class="t" style="left:2794.50px;top:1419.74px;font-size:40.70px;color:#2e2e2e;transform:scaleX(0.8567);">2946–2957</div>
<div class="t" style="left:3240.50px;top:1359.94px;font-size:40.70px;color:#2e2e2e;transform:scaleX(0.8956);">2024</div>
<div class="t" style="left:3546.50px;top:1359.94px;font-size:40.70px;color:#2e2e2e;transform:scaleX(0.9943);">0</div>
<svg class="r" style="left:0;top:0;width:3713px;height:1564px" viewBox="0 0 3713 1564"><circle cx="1840" cy="87.5" r="17.1" fill="none" stroke="#0077c0" stroke-width="4.2"/><path d="M1853 100.5 L1866 113.5" stroke="#0077c0" stroke-width="4.4"/><path d="M2655.2 106.8 L2675 87 M2654 86.5 L2675.5 86.5 L2675.5 108" fill="none" stroke="#6e6e6e" stroke-width="3"/><circle cx="2821.3" cy="91.3" r="21.2" fill="none" stroke="#444" stroke-width="3.7"/><path d="M2815.8 85.5 Q2815.8 80.8 2821.6 80.8 Q2827.6 80.8 2827.6 85.6 Q2827.6 88.6 2824.4 90.6 Q2821.6 92.4 2821.6 96.2" fill="none" stroke="#444" stroke-width="4.3"/><circle cx="2821.4" cy="101.6" r="2.9" fill="#444"/><path fill="#444" fill-rule="evenodd" d="M2951.2 64 L2975 76.5 L2975 86.5 L2927.5 86.5 L2927.5 76.5 Z M2951.2 68.6 L2931.6 78.8 L2931.6 82.5 L2970.9 82.5 L2970.9 78.8 Z"/><path d="M2934.5 86 L2934.5 106 M2946 86 L2946 106 M2956.9 86 L2956.9 106 M2968.4 86 L2968.4 106" stroke="#444" stroke-width="3.8"/><path fill="#444" fill-rule="evenodd" d="M2927.5 104 L2975 104 L2975 118 L2927.5 118 Z M2932 108.6 L2970.5 108.6 L2970.5 113.8 L2932 113.8 Z"/><path d="M1625.3 519.1 L1643.2 536.9 L1660.6 518.7" fill="none" stroke="#0077c0" stroke-width="4.1"/><path d="M2048 481.5 L2048 489.4 M2040.8 487 L2048 489.4 L2055.5 487 M2043.8 496 L2048 489.4 L2052.2 496" fill="none" stroke="#e8413c" stroke-width="3.2" stroke-linecap="round" stroke-linejoin="round"/><path d="M3057 514.5 L3083.7 539 M3083.7 514.5 L3057 539" stroke="#0077c0" stroke-width="4"/><path d="M128 590.6 L156.8 590.6 L156.8 630.8 L142.3 622.3 L127.8 630.8 Z" fill="none" stroke="#0077c0" stroke-width="4.4"/><path d="M138.5 695.3 L154.6 695.3 L156.6 712 L164.4 724.9 L127.6 724.9 L136 712 Z" fill="none" stroke="#0077c0" stroke-width="4" stroke-linejoin="round"/><path d="M141.5 731.3 Q147.2 736.5 152.8 731.3" fill="none" stroke="#0077c0" stroke-width="3.6"/><path d="M871.3 696 L871.3 730.5 M854 713.3 L888.5 713.3" stroke="#0077c0" stroke-width="4"/><circle cx="3091.5" cy="710.8" r="13.6" fill="none" stroke="#fff" stroke-width="3.4"/><path d="M3101.8 721 L3113 732" stroke="#fff" stroke-width="3.6"/><path d="M2239.2 860.8 L2260 840.5 M2238 840.0 L2260.5 840.0 L2260.5 862" fill="none" stroke="#6e6e6e" stroke-width="3"/><path d="M3249.3 996 L3260.3 977.1 L3273.7 991.9 L3284.3 967" fill="none" stroke="#0077c0" stroke-width="4.2" stroke-linejoin="round"/><circle cx="3249.3" cy="996" r="4.6" fill="#0077c0"/><circle cx="3284.3" cy="967.5" r="4.6" fill="#0077c0"/><path d="M3565.2 996.3 L3586 976 M3564 975.5 L3586.5 975.5 L3586.5 997.5" fill="none" stroke="#6e6e6e" stroke-width="3"/><path d="M1014.7 1085.2 L1029.5 1100.7 L1044.3 1085.2" fill="none" stroke="#0077c0" stroke-width="4"/><path d="M1239.7 1085.2 L1254.8 1100.7 L1269.8 1085.2" fill="none" stroke="#0077c0" stroke-width="4"/><circle cx="1911.6" cy="1091.3" r="5.2" fill="#0077c0"/><circle cx="1929.3" cy="1091.3" r="5.2" fill="#0077c0"/><circle cx="1946.4" cy="1091.3" r="5.2" fill="#0077c0"/><path d="M3321.6 1083.7 L3339.4 1101.9 L3357.2 1083.3" fill="none" stroke="#0077c0" stroke-width="4"/><rect x="3437" y="1072.2" width="33.7" height="33.6" rx="1.5" fill="none" stroke="#0077c0" stroke-width="4"/><path d="M3454.2 1072 L3454.2 1106 M3437 1088.3 L3471 1088.3" stroke="#0077c0" stroke-width="4"/><circle cx="3531.5" cy="1077.4" r="3.4" fill="#0077c0"/><path d="M3541 1077.4 L3567 1077.4" stroke="#0077c0" stroke-width="4.3"/><circle cx="3531.5" cy="1089.7" r="3.4" fill="#0077c0"/><path d="M3541 1089.7 L3567 1089.7" stroke="#0077c0" stroke-width="4.3"/><circle cx="3531.5" cy="1101.5" r="3.4" fill="#0077c0"/><path d="M3541 1101.5 L3567 1101.5" stroke="#0077c0" stroke-width="4.3"/><path d="M730.9000000000001 1524.3 L747.9 1507.8 L764.8 1524.3" fill="none" stroke="#0077c0" stroke-width="4"/><path d="M1282.2 1515.2 L1297.0 1531.2 L1311.8 1515.2" fill="none" stroke="#0077c0" stroke-width="4"/><path d="M1652.2 1534.8 L1673 1514 M1651 1513.5 L1673.5 1513.5 L1673.5 1536" fill="none" stroke="#6e6e6e" stroke-width="3"/></svg>
</body></html>
